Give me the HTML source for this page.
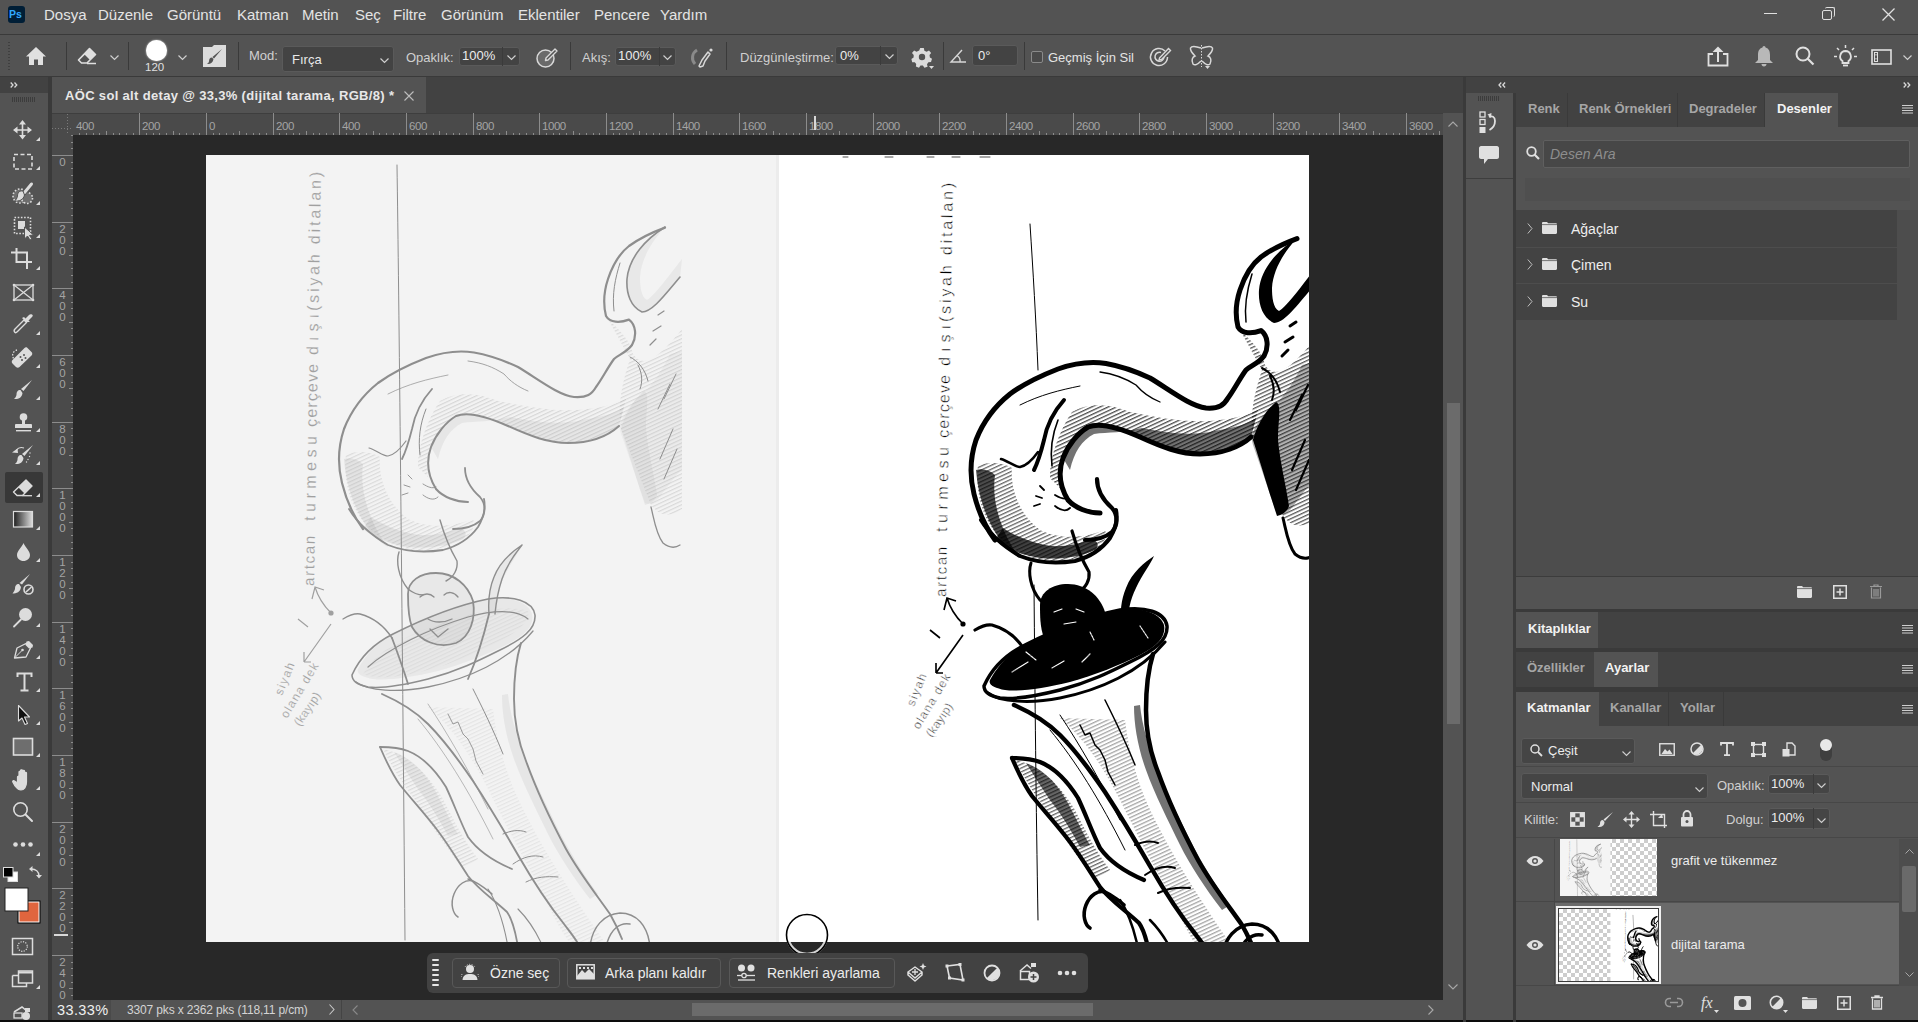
<!DOCTYPE html>
<html><head><meta charset="utf-8">
<style>
*{margin:0;padding:0;box-sizing:border-box}
html,body{width:1918px;height:1022px;overflow:hidden;background:#535353;font-family:"Liberation Sans",sans-serif;color:#dcdcdc}
.a{position:absolute}
.t{position:absolute;white-space:nowrap;line-height:1}
svg{position:absolute;overflow:visible}
.mi{font-size:15px;top:7px;color:#e4e4e4}
.ol{font-size:13px;color:#d0d0d0}
.box{position:absolute;background:#454545;border:1px solid #5a5a5a;border-radius:3px}
.sep{position:absolute;width:1px;background:#3a3a3a}
.rl{font-size:12px;color:#a0a0a0}
.tab{font-size:13px;font-weight:bold;color:#a6a6a6}
</style></head><body>
<!-- MENU BAR -->
<div class="a" style="left:0;top:0;width:1918px;height:34px;background:#535353"></div>
<div class="a" style="left:8px;top:6px;width:17px;height:17px;background:#001e36;border-radius:3px"></div>
<div class="t" style="left:9px;top:9px;font-size:10.5px;font-weight:bold;color:#31a8ff">Ps</div>
<div class="t mi" style="left:44px">Dosya</div>
<div class="t mi" style="left:98px">Düzenle</div>
<div class="t mi" style="left:167px">Görüntü</div>
<div class="t mi" style="left:237px">Katman</div>
<div class="t mi" style="left:302px">Metin</div>
<div class="t mi" style="left:355px">Seç</div>
<div class="t mi" style="left:393px">Filtre</div>
<div class="t mi" style="left:441px">Görünüm</div>
<div class="t mi" style="left:518px">Eklentiler</div>
<div class="t mi" style="left:594px">Pencere</div>
<div class="t mi" style="left:660px">Yardım</div>
<div class="a" style="left:1764px;top:13px;width:13px;height:1px;background:#e0e0e0"></div>
<div class="a" style="left:1822px;top:10px;width:10px;height:10px;border:1px solid #e0e0e0;border-radius:2px"></div>
<div class="a" style="left:1825px;top:7px;width:10px;height:10px;border-top:1px solid #e0e0e0;border-right:1px solid #e0e0e0;border-radius:2px"></div>
<svg style="left:1882px;top:8px" width="13" height="13"><path d="M0.5 0.5L12.5 12.5M12.5 0.5L0.5 12.5" stroke="#e0e0e0" stroke-width="1.3"/></svg>
<div class="a" style="left:0;top:34px;width:1918px;height:1px;background:#3a3a3a"></div>

<!-- OPTIONS BAR -->
<div class="a" style="left:8px;top:42px;width:2px;height:28px;background:repeating-linear-gradient(#3f3f3f 0 1px,transparent 1px 3px)"></div>
<svg style="left:25px;top:46px" width="22" height="20" viewBox="0 0 22 20"><path d="M11 1L1 10.5H4V19H9V13.5H13V19H18V10.5H21Z" fill="#e0e0e0"/></svg>
<div class="sep" style="left:66px;top:42px;height:28px"></div>
<svg style="left:77px;top:47px" width="20" height="18" viewBox="0 0 20 18"><path d="M12.5 1.5L18.5 7.5L10 16H4.5L1.5 13L12.5 1.5Z M1.5 13L7.5 7" fill="none" stroke="#e0e0e0" stroke-width="1.6" stroke-linejoin="round"/><path d="M12.5 1.5L18.5 7.5L13 13L7 7Z" fill="#e0e0e0"/><path d="M10 16.5H19" stroke="#e0e0e0" stroke-width="1.5"/></svg>
<svg style="left:110px;top:55px" width="9" height="6"><path d="M0.5 0.5L4.5 4.5L8.5 0.5" fill="none" stroke="#cfcfcf" stroke-width="1.2"/></svg>
<div class="sep" style="left:128px;top:42px;height:28px"></div>
<div class="a" style="left:146px;top:40px;width:21px;height:21px;border-radius:50%;background:#fff;box-shadow:0 0 2px #ddd"></div>
<div class="t" style="left:145px;top:62px;font-size:11.5px;color:#e0e0e0">120</div>
<svg style="left:178px;top:55px" width="9" height="6"><path d="M0.5 0.5L4.5 4.5L8.5 0.5" fill="none" stroke="#cfcfcf" stroke-width="1.2"/></svg>
<svg style="left:203px;top:45px" width="23" height="22" viewBox="0 0 23 22"><path d="M0 2H9L11 0H23V22H0Z" fill="#dcdcdc"/><path d="M19 4L11 13.5L9.5 12Z M9 12.5C7 12.5 6 14 6 16.5C5.5 18 4.5 18.5 4 19C7 19.5 10 18 10.5 14Z" fill="#535353"/></svg>
<div class="sep" style="left:238px;top:42px;height:28px"></div>
<div class="t ol" style="left:249px;top:49px">Mod:</div>
<div class="box" style="left:282px;top:46px;width:112px;height:26px;background:#434343"></div>
<div class="t ol" style="left:292px;top:53px;color:#e8e8e8">Fırça</div>
<svg style="left:380px;top:58px" width="9" height="6"><path d="M0.5 0.5L4.5 4.5L8.5 0.5" fill="none" stroke="#cfcfcf" stroke-width="1.2"/></svg>
<div class="t ol" style="left:406px;top:51px">Opaklık:</div>
<div class="box" style="left:459px;top:47px;width:61px;height:19px;background:#434343"></div>
<div class="a" style="left:502px;top:47px;width:1px;height:19px;background:#3b3b3b"></div>
<div class="t ol" style="left:462px;top:49px;color:#ececec">100%</div>
<svg style="left:507px;top:55px" width="9" height="6"><path d="M0.5 0.5L4.5 4.5L8.5 0.5" fill="none" stroke="#cfcfcf" stroke-width="1.2"/></svg>
<svg style="left:536px;top:46px" width="23" height="22" viewBox="0 0 23 22"><circle cx="9.5" cy="12.5" r="8.5" fill="#6a6a6a" stroke="#d8d8d8" stroke-width="1.5"/><path d="M10 12L19 3L21 5L12 14L9.5 14.5Z" fill="#535353" stroke="#d8d8d8" stroke-width="1.4" stroke-linejoin="round"/></svg>
<div class="sep" style="left:570px;top:42px;height:28px"></div>
<div class="t ol" style="left:582px;top:51px">Akış:</div>
<div class="box" style="left:615px;top:47px;width:61px;height:19px;background:#434343"></div>
<div class="a" style="left:659px;top:47px;width:1px;height:19px;background:#3b3b3b"></div>
<div class="t ol" style="left:618px;top:49px;color:#ececec">100%</div>
<svg style="left:663px;top:55px" width="9" height="6"><path d="M0.5 0.5L4.5 4.5L8.5 0.5" fill="none" stroke="#cfcfcf" stroke-width="1.2"/></svg>
<svg style="left:690px;top:47px" width="24" height="21" viewBox="0 0 24 21"><path d="M7 3A9 9 0 0 0 5 17" fill="none" stroke="#8a8a8a" stroke-width="3"/><path d="M9 19L12 13L18 5L20 7L15 14L13 19L10 20Z" fill="#535353" stroke="#d8d8d8" stroke-width="1.5" stroke-linejoin="round"/><circle cx="21" cy="3" r="1.6" fill="#d8d8d8"/></svg>
<div class="sep" style="left:726px;top:42px;height:28px"></div>
<div class="t ol" style="left:740px;top:51px">Düzgünleştirme:</div>
<div class="box" style="left:835px;top:46px;width:63px;height:19px;background:#434343"></div>
<div class="a" style="left:880px;top:46px;width:1px;height:19px;background:#3b3b3b"></div>
<div class="t ol" style="left:840px;top:49px;color:#ececec">0%</div>
<svg style="left:885px;top:54px" width="9" height="6"><path d="M0.5 0.5L4.5 4.5L8.5 0.5" fill="none" stroke="#cfcfcf" stroke-width="1.2"/></svg>
<svg style="left:912px;top:47px" width="22" height="22" viewBox="0 0 22 22"><g transform="translate(10 10)"><path d="M-1.8 -9H1.8L2.4 -6.3L4.6 -5.2L7 -6.6L9.1 -4.1L7.5 -2L7.9 0.4L10 1.8L9 5L6.4 5.2L5 7.2L5.6 9.8L2.4 10.8L0.9 8.5H-1.5L-3 10.8L-6.1 9.6L-5.8 7L-7.2 5.3L-9.8 5.3L-10.6 2L-8.4 0.6L-8.3 -1.9L-10 -4L-7.9 -6.6L-5.5 -5.3L-2.8 -6.5Z" fill="#dcdcdc"/><circle r="3.2" fill="#535353"/></g><path d="M17 19H22L19.5 22Z" fill="#dcdcdc"/></svg>
<div class="sep" style="left:943px;top:42px;height:28px"></div>
<svg style="left:950px;top:48px" width="17" height="15" viewBox="0 0 17 15"><path d="M16 14H1L12 2 M10 14A6 6 0 0 0 7.5 8" fill="none" stroke="#d8d8d8" stroke-width="1.4"/></svg>
<div class="box" style="left:972px;top:45px;width:46px;height:21px;background:#434343"></div>
<div class="t ol" style="left:978px;top:49px;color:#ececec">0°</div>
<div class="sep" style="left:1024px;top:42px;height:28px"></div>
<div class="a" style="left:1031px;top:51px;width:12px;height:12px;border:1px solid #8a8a8a;border-radius:2px;background:#4a4a4a"></div>
<div class="t ol" style="left:1048px;top:51px;color:#e4e4e4">Geçmiş İçin Sil</div>
<svg style="left:1150px;top:46px" width="22" height="21" viewBox="0 0 22 21"><path d="M15 5A8.5 8.5 0 1 0 17.5 11" fill="none" stroke="#d8d8d8" stroke-width="1.5"/><path d="M11 6.5A4.5 4.5 0 1 0 14 11" fill="none" stroke="#d8d8d8" stroke-width="1.5"/><path d="M9.5 12L18.5 2.5L20.5 4.5L11.5 13.5L9 14Z" fill="#535353" stroke="#d8d8d8" stroke-width="1.4"/></svg>
<svg style="left:1189px;top:45px" width="25" height="24" viewBox="0 0 25 24"><path d="M12 3C9 2 3 0 1.5 3C1 6 4 9 6 11C3.5 12 2 15 4 19C6 21 9 19 12 16" fill="none" stroke="#d8d8d8" stroke-width="1.5"/><path d="M13 3C16 2 22 0 23.5 3C24 6 21 9 19 11C21.5 12 23 15 21 19C19 21 16 19 13 16" fill="none" stroke="#d8d8d8" stroke-width="1.5"/><path d="M12.5 0V22" stroke="#d8d8d8" stroke-width="1" stroke-dasharray="1.5 1.5"/><path d="M16 21H21L18.5 24Z" fill="#d8d8d8"/></svg>
<svg style="left:1707px;top:46px" width="22" height="21" viewBox="0 0 22 21"><path d="M6 8H1.5V19.5H20.5V8H16" fill="none" stroke="#e0e0e0" stroke-width="1.8"/><path d="M11 16V5" stroke="#e0e0e0" stroke-width="2"/><path d="M11 0.5L5.5 6H16.5Z" fill="#e0e0e0"/></svg>
<svg style="left:1754px;top:45px" width="20" height="22" viewBox="0 0 20 22"><path d="M10 1C11 1 11.5 2 11.5 2.5C15 3.5 16 6.5 16 10V15L19 18H1L4 15V10C4 6.5 5 3.5 8.5 2.5C8.5 2 9 1 10 1Z M7.5 19H12.5C12.5 20.5 11.5 21.5 10 21.5C8.5 21.5 7.5 20.5 7.5 19Z" fill="#b8b8b8"/></svg>
<svg style="left:1795px;top:46px" width="20" height="20" viewBox="0 0 20 20"><circle cx="8" cy="8" r="6.5" fill="none" stroke="#e0e0e0" stroke-width="2"/><path d="M12.5 12.5L18.5 18.5" stroke="#e0e0e0" stroke-width="2.2"/></svg>
<svg style="left:1834px;top:45px" width="23" height="23" viewBox="0 0 23 23"><path d="M11.5 0V3 M3 3L5 5 M20 3L18 5 M0 11.5H3 M20 11.5H23" stroke="#e0e0e0" stroke-width="1.5"/><path d="M11.5 6A5.5 5.5 0 0 0 8.5 16V18H14.5V16A5.5 5.5 0 0 0 11.5 6Z" fill="none" stroke="#e0e0e0" stroke-width="1.8"/><path d="M9 20.5H14" stroke="#e0e0e0" stroke-width="1.8"/></svg>
<svg style="left:1871px;top:49px" width="21" height="16" viewBox="0 0 21 16"><rect x="1" y="1" width="19" height="14" fill="none" stroke="#e0e0e0" stroke-width="1.6"/><rect x="3.5" y="3.5" width="3" height="9" fill="none" stroke="#e0e0e0" stroke-width="1"/><rect x="4.5" y="5" width="1" height="1.5" fill="#e0e0e0"/><rect x="4.5" y="9" width="1" height="1.5" fill="#e0e0e0"/></svg>
<svg style="left:1903px;top:55px" width="9" height="6"><path d="M0.5 0.5L4.5 4.5L8.5 0.5" fill="none" stroke="#cfcfcf" stroke-width="1.2"/></svg>

<div class="a" style="left:0;top:76px;width:1918px;height:1px;background:#3a3a3a"></div>

<!-- LEFT TOOLBAR -->
<div class="a" style="left:0;top:77px;width:48px;height:16px;background:#424242"></div>
<svg style="left:10px;top:82px" width="8" height="6"><path d="M0.7 0.5L3 3L0.7 5.5M4.5 0.5L6.8 3L4.5 5.5" fill="none" stroke="#d8d8d8" stroke-width="1.3"/></svg>
<div class="a" style="left:0;top:93px;width:48px;height:929px;background:#535353"></div>
<div class="a" style="left:48px;top:77px;width:4px;height:945px;background:#3a3a3a"></div>

<svg style="left:0;top:0" width="48" height="1022" viewBox="0 0 48 1022">
<g fill="#3e3e3e"><rect x="12" y="97" width="24" height="5" fill="url(#grip)"/></g>
<defs><pattern id="grip" width="2" height="5" patternUnits="userSpaceOnUse"><rect width="1" height="5" fill="#3c3c3c"/></pattern></defs>
<g fill="#dcdcdc">
<path d="M36 141H40V137Z"/><path d="M36 170H40V166Z"/><path d="M36 205H40V201Z"/><path d="M36 238H40V234Z"/><path d="M36 270H40V266Z"/>
<path d="M36 335H40V331Z"/><path d="M36 368H40V364Z"/><path d="M36 400H40V396Z"/><path d="M36 432H40V428Z"/><path d="M36 465H40V461Z"/><path d="M36 497H40V493Z"/>
<path d="M36 530H40V526Z"/><path d="M36 562H40V558Z"/><path d="M36 627H40V623Z"/><path d="M36 659H40V655Z"/><path d="M36 692H40V688Z"/><path d="M36 725H40V721Z"/><path d="M36 757H40V753Z"/><path d="M36 790H40V786Z"/><path d="M36 856H40V852Z"/><path d="M36 989H40V985Z"/>
</g>
<!-- move -->
<g stroke="#dcdcdc" stroke-width="1.6" fill="none"><path d="M22.5 122V138 M14 130H31"/></g>
<g fill="#dcdcdc"><path d="M22.5 120L19 124.5H26Z M22.5 139.5L19 135H26Z M13 130L17.5 126.5V133.5Z M32 130L27.5 126.5V133.5Z"/></g>
<!-- marquee -->
<rect x="14" y="154.5" width="18" height="14.5" fill="none" stroke="#dcdcdc" stroke-width="1.6" stroke-dasharray="4 2.5"/>
<!-- quick select -->
<circle cx="20" cy="196" r="7" fill="#6e6e6e" stroke="#dcdcdc" stroke-width="1.6" stroke-dasharray="1.6 1.8"/>
<circle cx="27" cy="198" r="5.5" fill="#6e6e6e" stroke="#dcdcdc" stroke-width="1.6" stroke-dasharray="1.6 1.8"/>
<path d="M31.5 184L24 193" stroke="#535353" stroke-width="5" stroke-linecap="round"/><path d="M31.5 184L24.5 192.5" stroke="#dcdcdc" stroke-width="3" stroke-linecap="round"/><path d="M23 191C19 190.5 17.5 193 17.5 196C17 198.5 16 200 14.5 201C19 201.5 23.5 200 24.5 195Z" fill="#dcdcdc" stroke="#535353" stroke-width="1"/>
<!-- object select -->
<rect x="14.5" y="217.5" width="16" height="16" fill="none" stroke="#dcdcdc" stroke-width="1.6" stroke-dasharray="1.6 1.6"/>
<rect x="18" y="221" width="7" height="8" fill="#dcdcdc"/>
<path d="M24.5 227L24.5 239L27.5 236L30 240L32 239L29.5 235.5L33.5 235Z" fill="#dcdcdc" stroke="#535353" stroke-width="1"/>
<!-- crop -->
<g stroke="#dcdcdc" stroke-width="2" fill="none"><path d="M16.5 248V262H32 M11 252.5H27V269"/></g>
<!-- frame -->
<g stroke="#dcdcdc" stroke-width="1.3" fill="none"><rect x="14" y="285" width="19" height="15"/><path d="M14 285L33 300M33 285L14 300"/></g>
<g fill="#dcdcdc"><circle cx="14" cy="285" r="1.3"/><circle cx="33" cy="285" r="1.3"/><circle cx="14" cy="300" r="1.3"/><circle cx="33" cy="300" r="1.3"/></g>
<!-- eyedropper -->
<path d="M15 332.5C13.5 331 14 330 15 329L24 320L26.5 322.5L17.5 331.5C16.5 332.5 15.8 333.2 15 332.5Z" fill="none" stroke="#dcdcdc" stroke-width="1.4"/>
<path d="M22 318L26 322L30 322L28.5 320.5L32 317C33 316 33 315 32 314.5C31 314 30 314 29 315L25.5 318.5L24 317Z" fill="#dcdcdc"/>
<!-- healing -->
<path d="M17 350A5.5 5.5 0 0 0 14 359" fill="none" stroke="#dcdcdc" stroke-width="1.3" stroke-dasharray="1.5 1.5"/>
<path d="M27 347.5L31.5 352C32.5 353 32.5 354.5 31.5 355.5L19.5 367C18.5 368 17 368 16 367L12.5 363.5C11.5 362.5 11.5 361 12.5 360L24 348.5C25 347.5 26 347 27 347.5Z" fill="#dcdcdc"/>
<g fill="#535353"><circle cx="20.5" cy="357" r="1"/><circle cx="24" cy="355" r="1"/><circle cx="22" cy="360" r="1"/><circle cx="25.5" cy="358" r="1"/></g>
<!-- brush -->
<path d="M32 380L23.5 391L21 389Z" fill="#dcdcdc"/><path d="M20.5 390C17.5 390 16.5 392 16.5 395C16 397 15 398 14 399C18 399.5 22 398 22.5 393Z" fill="#dcdcdc"/>
<!-- stamp -->
<circle cx="23.5" cy="417" r="3.8" fill="#dcdcdc"/><path d="M22 419H25V424H31C31.5 424 32 424.5 32 425V428H15V425C15 424.5 15.5 424 16 424H22Z" fill="#dcdcdc"/><rect x="16" y="430" width="15" height="1.4" fill="#dcdcdc"/>
<!-- history brush -->
<path d="M33 445L24.5 456L22 454Z" fill="#dcdcdc"/><path d="M21.5 455C18.5 455 17.5 457 17.5 460C17 462 16 463 15 464C19 464.5 23 463 23.5 458Z" fill="#dcdcdc"/>
<path d="M24 448C21 447 18 448 16.5 450" fill="none" stroke="#dcdcdc" stroke-width="1.2"/><path d="M12 452.5L17.5 448.5L18 453Z" fill="#dcdcdc"/>
<g fill="#dcdcdc"><circle cx="30" cy="453" r="0.7"/><circle cx="29.5" cy="456.5" r="0.7"/><circle cx="28" cy="459.5" r="0.7"/><circle cx="26.5" cy="462" r="0.7"/></g>
</svg>
<div class="a" style="left:5px;top:472px;width:38px;height:31px;background:#383838;border-radius:2px"></div>
<svg style="left:0;top:0" width="48" height="1022" viewBox="0 0 48 1022">
<g fill="#dcdcdc">
<path d="M36 497H40V493Z"/>
</g>
<!-- eraser -->
<path d="M26 480L32 486L22.5 495.5H17L13.5 492Z" fill="none" stroke="#dcdcdc" stroke-width="1.4" stroke-linejoin="round"/><path d="M26 480L32 486L24.5 493.5L18.5 487.5Z" fill="#dcdcdc"/><path d="M22.5 495.7H32" stroke="#dcdcdc" stroke-width="1.3"/>
<!-- gradient -->
<defs><linearGradient id="gr" x1="0" x2="1"><stop offset="0" stop-color="#1e1e1e"/><stop offset="1" stop-color="#dedede"/></linearGradient></defs>
<rect x="13.5" y="511.5" width="19" height="15.5" fill="url(#gr)" stroke="#dcdcdc" stroke-width="1.2"/>
<!-- drop -->
<path d="M23.5 543C22 547 17 551 17 555C17 558.5 20 561 23.5 561C27 561 30 558.5 30 555C30 551 25 547 23.5 543Z" fill="#dcdcdc"/>
<!-- sponge brush -->
<path d="M30 574L22 584.5L19.5 583Z" fill="#dcdcdc"/><path d="M19 584C16 584 15 586 15 589C14.5 591 13.5 592 12.5 593.5C16.5 593.5 20.5 592 21 587Z" fill="#dcdcdc"/>
<circle cx="28.5" cy="589.5" r="4.5" fill="none" stroke="#dcdcdc" stroke-width="1.6"/><path d="M26 592L31.5 587" stroke="#dcdcdc" stroke-width="1.6"/>
<!-- dodge -->
<circle cx="25.5" cy="614.5" r="6.5" fill="#dcdcdc"/><path d="M21 619.5L14 626.5" stroke="#dcdcdc" stroke-width="1.8" stroke-linecap="round"/>
<!-- pen -->
<path d="M14.5 658L17 648L26 643.5L30.5 648L26 657Z" fill="none" stroke="#dcdcdc" stroke-width="1.3" stroke-linejoin="round"/><path d="M26.5 641.5L29 641L33 645L32.5 647.5L29 648.5L25.5 645Z" fill="#dcdcdc"/><path d="M14.5 658L22 650.5" stroke="#dcdcdc" stroke-width="1"/><circle cx="22.5" cy="650" r="1.3" fill="#dcdcdc"/>
<!-- type -->
<path d="M17.5 677V673.5H31.5V677 M24.5 674V690 M20.5 690.5H28.5" fill="none" stroke="#dcdcdc" stroke-width="2"/>
<!-- arrow -->
<path d="M18.5 705.5V721L22 718L25 724.5L27.5 723.5L24.5 717H29.5Z" fill="#111" stroke="#dcdcdc" stroke-width="1.1" stroke-linejoin="round"/>
<!-- rect -->
<rect x="13.5" y="738.5" width="19" height="16.5" fill="#6e6e6e" stroke="#dcdcdc" stroke-width="1.6"/>
<!-- hand -->
<path d="M19 779V772C19 771 20.5 771 20.5 772V779 M20.5 778V770.5C20.5 769.5 22.5 769.5 22.5 770.5V778 M22.5 778V771C22.5 770 24.5 770 24.5 771V778 M24.5 778V773C24.5 772 26.5 772 26.5 773V782C26.5 787 24 790 21 790C18 790 16.5 788 15 786L12.8 782C12.3 781 13.5 780 14.5 781L17.5 783V777C17.5 776 19 776 19 777" fill="#dcdcdc" stroke="#dcdcdc" stroke-width="1.2"/>
<!-- zoom -->
<circle cx="20.5" cy="809.5" r="6.7" fill="none" stroke="#dcdcdc" stroke-width="1.6"/><path d="M25.5 814.5L32 821" stroke="#dcdcdc" stroke-width="2" stroke-linecap="round"/>
<!-- dots -->
<g fill="#dcdcdc"><circle cx="15.5" cy="844.5" r="2.3"/><circle cx="23" cy="844.5" r="2.3"/><circle cx="30.5" cy="844.5" r="2.3"/></g>
<!-- default colors -->
<rect x="8" y="872" width="9.5" height="9.5" fill="#fff" stroke="#dcdcdc" stroke-width="1"/><rect x="3.5" y="867.5" width="9.5" height="9.5" fill="#000" stroke="#dcdcdc" stroke-width="1"/>
<!-- swap -->
<path d="M31 869C36 869 39 872 39 876" fill="none" stroke="#dcdcdc" stroke-width="1.6"/><path d="M29 869L32.5 866V872Z M39 878.5L36 875H42Z" fill="#dcdcdc"/>
<!-- fg/bg -->
<rect x="17.5" y="900.5" width="23" height="23" fill="#000" /><rect x="18.5" y="901.5" width="21" height="21" fill="#fff"/><rect x="19.5" y="902.5" width="19" height="19" fill="#e0653e"/>
<rect x="4.5" y="887.5" width="24" height="24" fill="#222"/><rect x="5.5" y="888.5" width="22" height="22" fill="#fff"/>
<!-- quick mask -->
<rect x="12.5" y="938.5" width="20" height="16" fill="none" stroke="#dcdcdc" stroke-width="1.5"/><circle cx="22.5" cy="946.5" r="4.8" fill="none" stroke="#dcdcdc" stroke-width="1.2" stroke-dasharray="1.2 1.3"/>
<!-- screen mode -->
<path d="M12.5 975.5H18.5 M12.5 975.5V986.5H26.5V983" fill="none" stroke="#dcdcdc" stroke-width="1.5"/><rect x="18.5" y="971" width="14" height="12" fill="none" stroke="#dcdcdc" stroke-width="1.5"/><path d="M18.5 972.5H32.5" stroke="#dcdcdc" stroke-width="2"/>
<!-- partial bottom -->
<path d="M14 1012L22 1007L28 1012" fill="none" stroke="#dcdcdc" stroke-width="1.5"/><rect x="14" y="1013" width="8" height="5" fill="none" stroke="#dcdcdc" stroke-width="1.3"/><circle cx="26" cy="1016" r="4" fill="#dcdcdc"/><rect x="25" y="1008" width="5" height="4" fill="#dcdcdc"/>
</svg>

<!-- DOC TAB AREA -->
<div class="a" style="left:52px;top:77px;width:1411px;height:36px;background:#424242"></div>
<div class="a" style="left:52px;top:77px;width:374px;height:36px;background:#535353"></div>
<div class="t tab" style="left:65px;top:89px;color:#e8e8e8;letter-spacing:0.33px">AÖC sol alt detay @ 33,3% (dijital tarama, RGB/8) *</div>
<svg style="left:404px;top:91px" width="10" height="10"><path d="M0.5 0.5L9.5 9.5M9.5 0.5L0.5 9.5" stroke="#bdbdbd" stroke-width="1.1"/></svg>

<!-- RULERS -->
<div class="a" style="left:52px;top:113px;width:1391px;height:22px;background:#4a4a4a;border-top:1px solid #3e3e3e"></div>
<div class="a" style="left:52px;top:135px;width:21px;height:865px;background:#4a4a4a"></div>

<svg style="left:0;top:0" width="1443" height="136" viewBox="0 0 1443 136">
<g stroke="#8c8c8c" stroke-width="1">
<path d="M79.5 133V135"/>
<path d="M86.5 133V135"/>
<path d="M93.5 133V135"/>
<path d="M99.5 133V135"/>
<path d="M106.5 131V135"/>
<path d="M113.5 133V135"/>
<path d="M119.5 133V135"/>
<path d="M126.5 133V135"/>
<path d="M133.5 133V135"/>
<path d="M139.5 113V135"/>
<path d="M146.5 133V135"/>
<path d="M153.5 133V135"/>
<path d="M159.5 133V135"/>
<path d="M166.5 133V135"/>
<path d="M173.5 131V135"/>
<path d="M179.5 133V135"/>
<path d="M186.5 133V135"/>
<path d="M193.5 133V135"/>
<path d="M199.5 133V135"/>
<path d="M206.5 113V135"/>
<path d="M213.5 133V135"/>
<path d="M219.5 133V135"/>
<path d="M226.5 133V135"/>
<path d="M233.5 133V135"/>
<path d="M239.5 131V135"/>
<path d="M246.5 133V135"/>
<path d="M253.5 133V135"/>
<path d="M259.5 133V135"/>
<path d="M266.5 133V135"/>
<path d="M273.5 113V135"/>
<path d="M279.5 133V135"/>
<path d="M286.5 133V135"/>
<path d="M293.5 133V135"/>
<path d="M299.5 133V135"/>
<path d="M306.5 131V135"/>
<path d="M313.5 133V135"/>
<path d="M319.5 133V135"/>
<path d="M326.5 133V135"/>
<path d="M333.5 133V135"/>
<path d="M339.5 113V135"/>
<path d="M346.5 133V135"/>
<path d="M353.5 133V135"/>
<path d="M359.5 133V135"/>
<path d="M366.5 133V135"/>
<path d="M373.5 131V135"/>
<path d="M379.5 133V135"/>
<path d="M386.5 133V135"/>
<path d="M393.5 133V135"/>
<path d="M399.5 133V135"/>
<path d="M406.5 113V135"/>
<path d="M413.5 133V135"/>
<path d="M419.5 133V135"/>
<path d="M426.5 133V135"/>
<path d="M433.5 133V135"/>
<path d="M439.5 131V135"/>
<path d="M446.5 133V135"/>
<path d="M453.5 133V135"/>
<path d="M459.5 133V135"/>
<path d="M466.5 133V135"/>
<path d="M473.5 113V135"/>
<path d="M479.5 133V135"/>
<path d="M486.5 133V135"/>
<path d="M493.5 133V135"/>
<path d="M499.5 133V135"/>
<path d="M506.5 131V135"/>
<path d="M513.5 133V135"/>
<path d="M519.5 133V135"/>
<path d="M526.5 133V135"/>
<path d="M533.5 133V135"/>
<path d="M539.5 113V135"/>
<path d="M546.5 133V135"/>
<path d="M553.5 133V135"/>
<path d="M559.5 133V135"/>
<path d="M566.5 133V135"/>
<path d="M573.5 131V135"/>
<path d="M579.5 133V135"/>
<path d="M586.5 133V135"/>
<path d="M593.5 133V135"/>
<path d="M599.5 133V135"/>
<path d="M606.5 113V135"/>
<path d="M613.5 133V135"/>
<path d="M619.5 133V135"/>
<path d="M626.5 133V135"/>
<path d="M633.5 133V135"/>
<path d="M639.5 131V135"/>
<path d="M646.5 133V135"/>
<path d="M653.5 133V135"/>
<path d="M659.5 133V135"/>
<path d="M666.5 133V135"/>
<path d="M673.5 113V135"/>
<path d="M679.5 133V135"/>
<path d="M686.5 133V135"/>
<path d="M693.5 133V135"/>
<path d="M699.5 133V135"/>
<path d="M706.5 131V135"/>
<path d="M713.5 133V135"/>
<path d="M719.5 133V135"/>
<path d="M726.5 133V135"/>
<path d="M733.5 133V135"/>
<path d="M739.5 113V135"/>
<path d="M746.5 133V135"/>
<path d="M753.5 133V135"/>
<path d="M759.5 133V135"/>
<path d="M766.5 133V135"/>
<path d="M773.5 131V135"/>
<path d="M779.5 133V135"/>
<path d="M786.5 133V135"/>
<path d="M793.5 133V135"/>
<path d="M799.5 133V135"/>
<path d="M806.5 113V135"/>
<path d="M813.5 133V135"/>
<path d="M819.5 133V135"/>
<path d="M826.5 133V135"/>
<path d="M833.5 133V135"/>
<path d="M839.5 131V135"/>
<path d="M846.5 133V135"/>
<path d="M853.5 133V135"/>
<path d="M859.5 133V135"/>
<path d="M866.5 133V135"/>
<path d="M873.5 113V135"/>
<path d="M879.5 133V135"/>
<path d="M886.5 133V135"/>
<path d="M893.5 133V135"/>
<path d="M899.5 133V135"/>
<path d="M906.5 131V135"/>
<path d="M913.5 133V135"/>
<path d="M919.5 133V135"/>
<path d="M926.5 133V135"/>
<path d="M933.5 133V135"/>
<path d="M939.5 113V135"/>
<path d="M946.5 133V135"/>
<path d="M953.5 133V135"/>
<path d="M959.5 133V135"/>
<path d="M966.5 133V135"/>
<path d="M973.5 131V135"/>
<path d="M979.5 133V135"/>
<path d="M986.5 133V135"/>
<path d="M993.5 133V135"/>
<path d="M999.5 133V135"/>
<path d="M1006.5 113V135"/>
<path d="M1013.5 133V135"/>
<path d="M1019.5 133V135"/>
<path d="M1026.5 133V135"/>
<path d="M1033.5 133V135"/>
<path d="M1039.5 131V135"/>
<path d="M1046.5 133V135"/>
<path d="M1053.5 133V135"/>
<path d="M1059.5 133V135"/>
<path d="M1066.5 133V135"/>
<path d="M1073.5 113V135"/>
<path d="M1079.5 133V135"/>
<path d="M1086.5 133V135"/>
<path d="M1093.5 133V135"/>
<path d="M1099.5 133V135"/>
<path d="M1106.5 131V135"/>
<path d="M1113.5 133V135"/>
<path d="M1119.5 133V135"/>
<path d="M1126.5 133V135"/>
<path d="M1133.5 133V135"/>
<path d="M1139.5 113V135"/>
<path d="M1146.5 133V135"/>
<path d="M1153.5 133V135"/>
<path d="M1159.5 133V135"/>
<path d="M1166.5 133V135"/>
<path d="M1173.5 131V135"/>
<path d="M1179.5 133V135"/>
<path d="M1186.5 133V135"/>
<path d="M1193.5 133V135"/>
<path d="M1199.5 133V135"/>
<path d="M1206.5 113V135"/>
<path d="M1213.5 133V135"/>
<path d="M1219.5 133V135"/>
<path d="M1226.5 133V135"/>
<path d="M1233.5 133V135"/>
<path d="M1239.5 131V135"/>
<path d="M1246.5 133V135"/>
<path d="M1253.5 133V135"/>
<path d="M1259.5 133V135"/>
<path d="M1266.5 133V135"/>
<path d="M1273.5 113V135"/>
<path d="M1279.5 133V135"/>
<path d="M1286.5 133V135"/>
<path d="M1293.5 133V135"/>
<path d="M1299.5 133V135"/>
<path d="M1306.5 131V135"/>
<path d="M1313.5 133V135"/>
<path d="M1319.5 133V135"/>
<path d="M1326.5 133V135"/>
<path d="M1333.5 133V135"/>
<path d="M1339.5 113V135"/>
<path d="M1346.5 133V135"/>
<path d="M1353.5 133V135"/>
<path d="M1359.5 133V135"/>
<path d="M1366.5 133V135"/>
<path d="M1373.5 131V135"/>
<path d="M1379.5 133V135"/>
<path d="M1386.5 133V135"/>
<path d="M1393.5 133V135"/>
<path d="M1399.5 133V135"/>
<path d="M1406.5 113V135"/>
<path d="M1413.5 133V135"/>
<path d="M1419.5 133V135"/>
<path d="M1426.5 133V135"/>
<path d="M1433.5 133V135"/>
<path d="M1439.5 131V135"/>
</g><g fill="#a4a4a4" font-size="11.5" font-family="Liberation Sans" letter-spacing="-0.45">
<text x="76" y="130">400</text>
<text x="142" y="130">200</text>
<text x="209" y="130">0</text>
<text x="276" y="130">200</text>
<text x="342" y="130">400</text>
<text x="409" y="130">600</text>
<text x="476" y="130">800</text>
<text x="542" y="130">1000</text>
<text x="609" y="130">1200</text>
<text x="676" y="130">1400</text>
<text x="742" y="130">1600</text>
<text x="809" y="130">1800</text>
<text x="876" y="130">2000</text>
<text x="942" y="130">2200</text>
<text x="1009" y="130">2400</text>
<text x="1076" y="130">2600</text>
<text x="1142" y="130">2800</text>
<text x="1209" y="130">3000</text>
<text x="1276" y="130">3200</text>
<text x="1342" y="130">3400</text>
<text x="1409" y="130">3600</text>
</g>
<path d="M52 128.5H72 M67.5 114V135" stroke="#7a7a7a" stroke-width="1" stroke-dasharray="1 2"/>
</svg>
<svg style="left:0;top:0" width="74" height="1000" viewBox="0 0 74 1000">
<g stroke="#8c8c8c" stroke-width="1">
<path d="M71 135.5H73"/>
<path d="M71 142.5H73"/>
<path d="M71 148.5H73"/>
<path d="M52 155.5H73"/>
<path d="M71 162.5H73"/>
<path d="M71 168.5H73"/>
<path d="M71 175.5H73"/>
<path d="M71 182.5H73"/>
<path d="M69 188.5H73"/>
<path d="M71 195.5H73"/>
<path d="M71 202.5H73"/>
<path d="M71 208.5H73"/>
<path d="M71 215.5H73"/>
<path d="M52 222.5H73"/>
<path d="M71 228.5H73"/>
<path d="M71 235.5H73"/>
<path d="M71 242.5H73"/>
<path d="M71 248.5H73"/>
<path d="M69 255.5H73"/>
<path d="M71 262.5H73"/>
<path d="M71 268.5H73"/>
<path d="M71 275.5H73"/>
<path d="M71 282.5H73"/>
<path d="M52 288.5H73"/>
<path d="M71 295.5H73"/>
<path d="M71 302.5H73"/>
<path d="M71 308.5H73"/>
<path d="M71 315.5H73"/>
<path d="M69 322.5H73"/>
<path d="M71 328.5H73"/>
<path d="M71 335.5H73"/>
<path d="M71 342.5H73"/>
<path d="M71 348.5H73"/>
<path d="M52 355.5H73"/>
<path d="M71 362.5H73"/>
<path d="M71 368.5H73"/>
<path d="M71 375.5H73"/>
<path d="M71 382.5H73"/>
<path d="M69 388.5H73"/>
<path d="M71 395.5H73"/>
<path d="M71 402.5H73"/>
<path d="M71 408.5H73"/>
<path d="M71 415.5H73"/>
<path d="M52 422.5H73"/>
<path d="M71 428.5H73"/>
<path d="M71 435.5H73"/>
<path d="M71 442.5H73"/>
<path d="M71 448.5H73"/>
<path d="M69 455.5H73"/>
<path d="M71 462.5H73"/>
<path d="M71 468.5H73"/>
<path d="M71 475.5H73"/>
<path d="M71 482.5H73"/>
<path d="M52 488.5H73"/>
<path d="M71 495.5H73"/>
<path d="M71 502.5H73"/>
<path d="M71 508.5H73"/>
<path d="M71 515.5H73"/>
<path d="M69 522.5H73"/>
<path d="M71 528.5H73"/>
<path d="M71 535.5H73"/>
<path d="M71 542.5H73"/>
<path d="M71 548.5H73"/>
<path d="M52 555.5H73"/>
<path d="M71 562.5H73"/>
<path d="M71 568.5H73"/>
<path d="M71 575.5H73"/>
<path d="M71 582.5H73"/>
<path d="M69 588.5H73"/>
<path d="M71 595.5H73"/>
<path d="M71 602.5H73"/>
<path d="M71 608.5H73"/>
<path d="M71 615.5H73"/>
<path d="M52 622.5H73"/>
<path d="M71 628.5H73"/>
<path d="M71 635.5H73"/>
<path d="M71 642.5H73"/>
<path d="M71 648.5H73"/>
<path d="M69 655.5H73"/>
<path d="M71 662.5H73"/>
<path d="M71 668.5H73"/>
<path d="M71 675.5H73"/>
<path d="M71 682.5H73"/>
<path d="M52 688.5H73"/>
<path d="M71 695.5H73"/>
<path d="M71 702.5H73"/>
<path d="M71 708.5H73"/>
<path d="M71 715.5H73"/>
<path d="M69 722.5H73"/>
<path d="M71 728.5H73"/>
<path d="M71 735.5H73"/>
<path d="M71 742.5H73"/>
<path d="M71 748.5H73"/>
<path d="M52 755.5H73"/>
<path d="M71 762.5H73"/>
<path d="M71 768.5H73"/>
<path d="M71 775.5H73"/>
<path d="M71 782.5H73"/>
<path d="M69 788.5H73"/>
<path d="M71 795.5H73"/>
<path d="M71 802.5H73"/>
<path d="M71 808.5H73"/>
<path d="M71 815.5H73"/>
<path d="M52 822.5H73"/>
<path d="M71 828.5H73"/>
<path d="M71 835.5H73"/>
<path d="M71 842.5H73"/>
<path d="M71 848.5H73"/>
<path d="M69 855.5H73"/>
<path d="M71 862.5H73"/>
<path d="M71 868.5H73"/>
<path d="M71 875.5H73"/>
<path d="M71 882.5H73"/>
<path d="M52 888.5H73"/>
<path d="M71 895.5H73"/>
<path d="M71 902.5H73"/>
<path d="M71 908.5H73"/>
<path d="M71 915.5H73"/>
<path d="M69 922.5H73"/>
<path d="M71 928.5H73"/>
<path d="M71 935.5H73"/>
<path d="M71 942.5H73"/>
<path d="M71 948.5H73"/>
<path d="M52 955.5H73"/>
<path d="M71 962.5H73"/>
<path d="M71 968.5H73"/>
<path d="M71 975.5H73"/>
<path d="M71 982.5H73"/>
<path d="M69 988.5H73"/>
<path d="M71 995.5H73"/>
</g><g fill="#a4a4a4" font-size="11.5" font-family="Liberation Sans" text-anchor="middle">
<text x="62.5" y="166">0</text>
<text x="62.5" y="233">2</text>
<text x="62.5" y="244">0</text>
<text x="62.5" y="255">0</text>
<text x="62.5" y="299">4</text>
<text x="62.5" y="310">0</text>
<text x="62.5" y="321">0</text>
<text x="62.5" y="366">6</text>
<text x="62.5" y="377">0</text>
<text x="62.5" y="388">0</text>
<text x="62.5" y="433">8</text>
<text x="62.5" y="444">0</text>
<text x="62.5" y="455">0</text>
<text x="62.5" y="499">1</text>
<text x="62.5" y="510">0</text>
<text x="62.5" y="521">0</text>
<text x="62.5" y="532">0</text>
<text x="62.5" y="566">1</text>
<text x="62.5" y="577">2</text>
<text x="62.5" y="588">0</text>
<text x="62.5" y="599">0</text>
<text x="62.5" y="633">1</text>
<text x="62.5" y="644">4</text>
<text x="62.5" y="655">0</text>
<text x="62.5" y="666">0</text>
<text x="62.5" y="699">1</text>
<text x="62.5" y="710">6</text>
<text x="62.5" y="721">0</text>
<text x="62.5" y="732">0</text>
<text x="62.5" y="766">1</text>
<text x="62.5" y="777">8</text>
<text x="62.5" y="788">0</text>
<text x="62.5" y="799">0</text>
<text x="62.5" y="833">2</text>
<text x="62.5" y="844">0</text>
<text x="62.5" y="855">0</text>
<text x="62.5" y="866">0</text>
<text x="62.5" y="899">2</text>
<text x="62.5" y="910">2</text>
<text x="62.5" y="921">0</text>
<text x="62.5" y="932">0</text>
<text x="62.5" y="966">2</text>
<text x="62.5" y="977">4</text>
<text x="62.5" y="988">0</text>
<text x="62.5" y="999">0</text>
</g></svg>
<div class="a" style="left:814px;top:116px;width:2px;height:14px;background:#d8d8d8"></div>
<div class="a" style="left:54px;top:934px;width:14px;height:2px;background:#d8d8d8"></div>
<!-- CANVAS -->
<div class="a" style="left:73px;top:135px;width:1370px;height:865px;background:#282828"></div>
<!--ART--><svg style="left:206px;top:155px" width="1103" height="787" viewBox="206 155 1103 787">
<defs><pattern id="hR" width="3.5" height="3.5" patternUnits="userSpaceOnUse" patternTransform="rotate(65)"><rect width="1.3" height="3.5" fill="#000"/></pattern><pattern id="hL" width="3.5" height="3.5" patternUnits="userSpaceOnUse" patternTransform="rotate(65)"><rect width="1.2" height="3.5" fill="#8e8e8e"/></pattern><clipPath id="cL"><rect x="206" y="155" width="573" height="787"/></clipPath><clipPath id="cR"><rect x="779" y="155" width="530" height="787"/></clipPath></defs>
<rect x="206" y="155" width="573" height="787" fill="#f3f3f3"/>
<rect x="776" y="155" width="3" height="787" fill="#ececec"/>
<rect x="779" y="155" width="530" height="787" fill="#fff"/>
<g clip-path="url(#cL)"><g transform="translate(-632 -11)"><path d="M843 157H848 M885 157H893 M927 157H934 M952 157H960 M980 157H990" fill="none" stroke="#8e8e8e" stroke-width="0.5" stroke-linecap="round" stroke-linejoin="round"/>
<path d="M1297 238.6C1285 243 1272 249 1261 257C1252 264 1245 275 1240 290C1236 302 1235 315 1238 327C1242 334 1252 334 1261 330.6C1268 336 1269 347 1264 356C1258 364 1250 366 1246 370C1240 378 1234 390 1228 398C1224 405 1219 409 1206 408C1190 406 1170 390 1150 378C1135 371 1120 366 1106 363.5C1090 361 1075 363 1058 369C1040 376 1025 383 1010 394C995 406 983 422 976 440C970 458 970 478 974 494C979 514 986 528 995 540" fill="none" stroke="#8e8e8e" stroke-width="2.2" stroke-linecap="round" stroke-linejoin="round"/>
<path d="M1297 238C1278 250 1261 268 1259 290C1258 305 1263 318 1274 323C1284 323 1296 307 1312 288L1314 270C1300 288 1287 306 1279 311C1273 308 1272 297 1272 288C1273 270 1284 252 1297 238Z" fill="#8e8e8e" fill-opacity="0.10"/>
<path d="M1252 274C1247 290 1244 305 1246 322" fill="none" stroke="#8e8e8e" stroke-width="1.0" stroke-linecap="round" stroke-linejoin="round"/>
<path d="M1290 326L1296 322 M1285 342L1293 337 M1282 356L1288 350" fill="none" stroke="#8e8e8e" stroke-width="1.2" stroke-linecap="round" stroke-linejoin="round"/>
<path d="M1262 368C1270 372 1277 380 1280 392 M1270 376C1274 384 1275 392 1272 400" fill="none" stroke="#8e8e8e" stroke-width="1.0" stroke-linecap="round" stroke-linejoin="round"/>
<path d="M1251 437C1240 447 1222 454 1200 454C1180 454 1162 447 1140 437C1120 428 1100 422 1088 427C1078 433 1068 445 1063 458C1058 472 1060 487 1068 500C1075 508 1088 513 1100 513" fill="none" stroke="#8e8e8e" stroke-width="2.0" stroke-linecap="round" stroke-linejoin="round"/>
<path d="M1251 437C1240 447 1222 454 1200 454C1180 454 1162 447 1140 437C1120 428 1100 422 1088 427C1078 433 1068 445 1063 458L1070 470C1074 452 1082 440 1094 434C1108 432 1124 433 1142 428C1162 432 1186 436 1210 432C1230 428 1245 426 1256 418Z" fill="#8e8e8e" fill-opacity="0.12"/>
<path d="M1251 437C1240 447 1222 454 1200 454C1180 454 1162 447 1140 437C1120 428 1100 422 1088 427C1078 433 1068 445 1063 458C1060 468 1058 478 1060 488L1050 478C1050 455 1060 430 1072 412C1090 402 1110 404 1130 412C1160 418 1190 424 1220 420C1238 418 1250 414 1258 410Z" fill="url(#hL)" fill-opacity="0.28"/>
<path d="M1100 372C1115 374 1125 378 1136 385C1142 392 1150 398 1160 402" fill="none" stroke="#8e8e8e" stroke-width="0.8" stroke-linecap="round" stroke-linejoin="round"/>
<path d="M1020 405C1040 395 1060 390 1080 386" fill="none" stroke="#8e8e8e" stroke-width="0.7" stroke-linecap="round" stroke-linejoin="round"/>
<path d="M1064 400C1055 410 1047 424 1044 440C1041 452 1038 462 1034 470" fill="none" stroke="#8e8e8e" stroke-width="1.8" stroke-linecap="round" stroke-linejoin="round"/>
<path d="M1058 420C1052 435 1050 450 1052 466" fill="none" stroke="#8e8e8e" stroke-width="1.0" stroke-linecap="round" stroke-linejoin="round"/>
<path d="M1001 459C1008 461 1015 467 1020 467C1026 466 1033 459 1038 452" fill="none" stroke="#8e8e8e" stroke-width="1.2" stroke-linecap="round" stroke-linejoin="round"/>
<path d="M976 470C978 495 985 515 995 532C1003 545 1010 552 1020 558C1012 548 1005 535 1000 520C995 505 993 490 995 475C990 470 982 468 976 470Z" fill="#8e8e8e" fill-opacity="0.15"/>
<path d="M981 520C990 535 1003 546 1020 556C1035 562 1055 564 1075 561C1090 557 1102 549 1110 538C1116 528 1118 520 1116 510" fill="none" stroke="#8e8e8e" stroke-width="1.8" stroke-linecap="round" stroke-linejoin="round"/>
<path d="M995 540C1005 548 1020 555 1040 558C1060 560 1080 557 1095 550C1100 545 1098 540 1090 540C1075 545 1060 548 1045 545C1030 542 1015 536 1003 528Z" fill="#8e8e8e" fill-opacity="0.17"/>
<path d="M1097 479C1097 490 1103 500 1112 508C1118 515 1118 525 1112 532C1105 538 1095 540 1085 540" fill="none" stroke="#8e8e8e" stroke-width="1.8" stroke-linecap="round" stroke-linejoin="round"/>
<path d="M1040 486L1044 490 M1036 496L1042 498 M1034 506L1040 504 M1055 495C1060 498 1064 500 1068 498 M1055 506C1060 510 1066 512 1070 508" fill="none" stroke="#8e8e8e" stroke-width="0.9" stroke-linecap="round" stroke-linejoin="round"/>
<path d="M1251 437C1256 425 1264 412 1275 404C1285 396 1295 380 1302 365L1314 362L1314 480C1303 492 1296 503 1290 510C1285 514 1280 516 1277 514C1270 495 1262 470 1253 445Z" fill="#8e8e8e" fill-opacity="0.07"/>
<path d="M1253 440C1262 468 1270 495 1277 516C1282 515 1287 512 1289 506C1286 485 1280 462 1278 440C1278 420 1282 405 1276 402C1266 410 1257 425 1253 440Z" fill="#8e8e8e" fill-opacity="0.10"/>
<path d="M1292 470L1305 440 M1296 490L1309 460 M1290 420L1302 395 M1296 410L1308 385" fill="none" stroke="#8e8e8e" stroke-width="1.0" stroke-linecap="round" stroke-linejoin="round"/>
<path d="M1283 518C1286 530 1288 545 1295 554C1300 558 1306 560 1312 556" fill="none" stroke="#8e8e8e" stroke-width="1.3" stroke-linecap="round" stroke-linejoin="round"/>
<path d="M1031 563C1028 572 1030 588 1040 600C1045 604 1050 606 1055 606" fill="none" stroke="#8e8e8e" stroke-width="1.4" stroke-linecap="round" stroke-linejoin="round"/>
<path d="M1072 531C1076 545 1082 560 1089 572C1090 580 1086 588 1078 592" fill="none" stroke="#8e8e8e" stroke-width="1.4" stroke-linecap="round" stroke-linejoin="round"/>
<path d="M1040 605C1040 592 1052 584 1068 584C1086 584 1100 596 1105 612C1108 630 1102 648 1088 654C1070 660 1052 652 1044 638C1040 628 1040 615 1040 605Z" fill="#8e8e8e" fill-opacity="0.10"/>
<path d="M990 680C998 665 1010 652 1030 642C1060 628 1090 616 1120 610C1140 607 1160 612 1164 625C1166 635 1160 645 1140 655C1120 665 1095 675 1070 682C1045 688 1020 692 1005 690C995 688 988 685 990 680Z" fill="#8e8e8e" fill-opacity="0.10"/>
<path d="M984 686C992 668 1005 655 1025 645C1055 630 1090 616 1120 610C1145 606 1165 612 1167 626C1168 640 1155 650 1130 662C1110 672 1090 682 1060 690C1040 695 1015 700 1000 698C990 696 984 692 984 686Z" fill="none" stroke="#8e8e8e" stroke-width="1.6" stroke-linecap="round" stroke-linejoin="round"/>
<path d="M988 693C1000 702 1030 704 1060 698C1100 690 1140 672 1165 642" fill="none" stroke="#8e8e8e" stroke-width="1.3" stroke-linecap="round" stroke-linejoin="round"/>
<path d="M975 630C980 627 986 624 992 625C1003 628 1015 635 1024 649" fill="none" stroke="#8e8e8e" stroke-width="1.4" stroke-linecap="round" stroke-linejoin="round"/>
<path d="M1154 556C1145 562 1132 572 1126 588C1121 600 1120 612 1121 625L1127 625C1128 612 1130 600 1136 588C1142 575 1150 565 1154 556Z" fill="#8e8e8e" fill-opacity="0.10"/>
<path d="M1014 705C1030 712 1045 720 1060 735C1075 750 1090 770 1105 792C1120 815 1135 840 1150 866C1165 892 1180 915 1196 935C1202 943 1208 950 1212 958" fill="none" stroke="#8e8e8e" stroke-width="1.9" stroke-linecap="round" stroke-linejoin="round"/>
<path d="M1153 654C1148 670 1146 690 1146 710C1146 730 1150 752 1158 772C1168 800 1182 830 1198 860C1212 885 1228 905 1242 925C1246 932 1250 940 1254 950" fill="none" stroke="#8e8e8e" stroke-width="1.9" stroke-linecap="round" stroke-linejoin="round"/>
<path d="M1140 705C1142 725 1148 745 1156 765C1165 790 1178 815 1190 840C1200 860 1215 885 1230 905L1222 910C1205 888 1190 865 1180 845C1168 820 1155 795 1146 770C1138 748 1134 725 1134 706Z" fill="#8e8e8e" fill-opacity="0.12"/>
<path d="M1105 700C1115 720 1125 740 1135 765" fill="none" stroke="#8e8e8e" stroke-width="1.0" stroke-linecap="round" stroke-linejoin="round"/>
<path d="M1060 715C1080 745 1100 780 1120 820 M1050 730C1075 760 1100 800 1125 850" fill="none" stroke="#8e8e8e" stroke-width="0.6" stroke-linecap="round" stroke-linejoin="round"/>
<path d="M1080 725L1085 735L1090 733L1095 745L1100 750L1105 760L1108 772L1115 785" fill="none" stroke="#8e8e8e" stroke-width="0.9" stroke-linecap="round" stroke-linejoin="round"/>
<path d="M1135 845C1142 842 1150 840 1158 843 M1145 875C1155 868 1165 865 1175 868 M1158 893C1168 888 1178 887 1190 888" fill="none" stroke="#8e8e8e" stroke-width="1.0" stroke-linecap="round" stroke-linejoin="round"/>
<path d="M1222 958C1224 938 1236 925 1252 924C1268 924 1280 936 1282 958 M1238 958C1242 940 1252 933 1262 935" fill="none" stroke="#8e8e8e" stroke-width="1.5" stroke-linecap="round" stroke-linejoin="round"/>
<path d="M1012 758C1020 758 1030 758 1040 762C1055 768 1068 782 1078 798C1086 815 1092 832 1100 848C1110 862 1125 872 1144 880" fill="none" stroke="#8e8e8e" stroke-width="1.8" stroke-linecap="round" stroke-linejoin="round"/>
<path d="M1012 758C1018 772 1025 786 1032 796C1045 812 1058 826 1070 842C1082 858 1092 875 1100 887C1110 900 1125 910 1139 923C1144 930 1147 940 1150 958" fill="none" stroke="#8e8e8e" stroke-width="1.8" stroke-linecap="round" stroke-linejoin="round"/>
<path d="M1026 763C1040 768 1055 780 1065 798C1075 815 1082 832 1090 845L1080 847C1072 832 1062 815 1050 800C1042 788 1034 776 1026 763Z" fill="#8e8e8e" fill-opacity="0.13"/>
<path d="M1105 892C1098 890 1090 895 1086 905C1082 915 1085 925 1090 928 M1100 890C1110 893 1118 900 1124 905" fill="none" stroke="#8e8e8e" stroke-width="1.5" stroke-linecap="round" stroke-linejoin="round"/>
<path d="M1120 900C1128 912 1135 930 1140 958 M1150 920C1158 928 1168 942 1175 958" fill="none" stroke="#8e8e8e" stroke-width="1.1" stroke-linecap="round" stroke-linejoin="round"/>
<path d="M1240 330C1250 340 1262 350 1265 365C1275 380 1290 370 1314 340L1314 520C1300 530 1290 525 1283 516L1253 440C1250 420 1252 400 1262 370Z" fill="url(#hL)" fill-opacity="0.26"/>
<path d="M978 465C990 462 1002 462 1012 468C1010 490 1020 515 1040 530C1060 540 1085 538 1105 530C1110 545 1090 560 1050 562C1020 558 995 540 985 515C978 500 976 480 978 465Z" fill="url(#hL)" fill-opacity="0.24"/>
<path d="M1060 718C1080 735 1100 760 1120 800C1135 830 1150 860 1170 895C1180 915 1190 940 1205 958L1240 958C1200 900 1175 860 1155 820C1140 790 1130 760 1125 720Z" fill="url(#hL)" fill-opacity="0.14"/>
<path d="M1015 760C1040 765 1060 785 1075 810C1085 830 1095 850 1110 870L1095 880C1080 860 1065 840 1050 815C1035 795 1025 780 1015 760Z" fill="url(#hL)" fill-opacity="0.24"/>
<path d="M995 685C1010 660 1040 645 1080 632C1110 622 1140 615 1160 622C1165 640 1120 660 1080 675C1040 688 1010 692 995 685Z" fill="url(#hL)" fill-opacity="0.12"/>
<path d="M1029 176C1031 311 1034 611 1037 951" fill="none" stroke="#8e8e8e" stroke-width="1.0" stroke-linecap="round" stroke-linejoin="round"/>
<path d="M1040 605C1040 592 1052 584 1068 584C1086 584 1100 596 1105 612C1108 630 1102 648 1088 654C1070 660 1052 652 1044 638C1040 628 1040 615 1040 605Z" fill="none" stroke="#8e8e8e" stroke-width="1.8" stroke-linecap="round" stroke-linejoin="round"/>
<path d="M1052 608C1056 604 1062 604 1066 608 M1076 606C1080 602 1086 603 1090 608 M1060 630C1066 634 1076 634 1084 630 M1062 640L1070 648L1080 640" fill="none" stroke="#8e8e8e" stroke-width="1.3" stroke-linecap="round" stroke-linejoin="round"/>
<path d="M1024 649C1030 665 1036 682 1040 695 M1121 625C1115 650 1108 672 1100 690" fill="none" stroke="#8e8e8e" stroke-width="1.8" stroke-linecap="round" stroke-linejoin="round"/>
<path d="M1000 678C1020 660 1060 640 1100 628C1130 620 1150 622 1160 630" fill="none" stroke="#8e8e8e" stroke-width="1.2" stroke-linecap="round" stroke-linejoin="round"/>
<path d="M1154 556C1145 562 1132 572 1126 588C1121 600 1120 612 1121 625 M1154 556C1146 566 1138 578 1134 590C1130 602 1128 614 1127 625" fill="none" stroke="#8e8e8e" stroke-width="1.4" stroke-linecap="round" stroke-linejoin="round"/>
<path d="M1297 238C1278 250 1261 268 1259 290C1258 305 1263 318 1274 323C1284 323 1296 307 1312 288" fill="none" stroke="#8e8e8e" stroke-width="1.6" stroke-linecap="round" stroke-linejoin="round"/>
<g fill="#a0a0a0" font-family="Liberation Sans" stroke="#f3f3f3" stroke-width="0.15">
<text transform="translate(950.6 322) rotate(-89)" font-size="16" textLength="139" lengthAdjust="spacing">(siyah ditalan)</text>
<text transform="translate(949.9 366) rotate(-89)" font-size="16" textLength="41" lengthAdjust="spacing">dışı</text>
<text transform="translate(948.7 438) rotate(-89)" font-size="16" textLength="63" lengthAdjust="spacing">çerçeve</text>
<text transform="translate(947.1 532) rotate(-89)" font-size="16" textLength="85" lengthAdjust="spacing">turmesu</text>
<text transform="translate(946.0 597) rotate(-89)" font-size="15" textLength="50" lengthAdjust="spacing">artcan</text>
<text transform="translate(914 707) rotate(-68)" font-size="12" textLength="34" lengthAdjust="spacing">siyah</text>
<text transform="translate(919 730) rotate(-59)" font-size="12" textLength="62" lengthAdjust="spacing">olana dek</text>
<text transform="translate(932 738) rotate(-56)" font-size="12" textLength="38" lengthAdjust="spacing">(kayıp)</text>
</g>
<path d="M947 598C950 608 955 616 963 624 M944 610L947 598L956 601 M963 635L936 673 M936 673L936 663 M936 673L943 673 M930 630L940 638" fill="none" stroke="#a0a0a0" stroke-width="1.2"/>
<circle cx="963" cy="624" r="2.6" fill="#a0a0a0"/></g></g>
<g clip-path="url(#cR)"><path d="M843 157H848 M885 157H893 M927 157H934 M952 157H960 M980 157H990" fill="none" stroke="#000" stroke-width="0.7" stroke-linecap="round" stroke-linejoin="round"/>
<path d="M1030 224C1033 270 1036 320 1038 370 M1034 585C1035 700 1036 800 1038 920" fill="none" stroke="#000" stroke-width="1.0" stroke-linecap="round" stroke-linejoin="round"/>
<path d="M1297 238.6C1285 243 1272 249 1261 257C1252 264 1245 275 1240 290C1236 302 1235 315 1238 327C1242 334 1252 334 1261 330.6C1268 336 1269 347 1264 356C1258 364 1250 366 1246 370C1240 378 1234 390 1228 398C1224 405 1219 409 1206 408C1190 406 1170 390 1150 378C1135 371 1120 366 1106 363.5C1090 361 1075 363 1058 369C1040 376 1025 383 1010 394C995 406 983 422 976 440C970 458 970 478 974 494C979 514 986 528 995 540" fill="none" stroke="#000" stroke-width="5.0" stroke-linecap="round" stroke-linejoin="round"/>
<path d="M1297 238C1278 250 1261 268 1259 290C1258 305 1263 318 1274 323C1284 323 1296 307 1312 288L1314 270C1300 288 1287 306 1279 311C1273 308 1272 297 1272 288C1273 270 1284 252 1297 238Z" fill="#000" fill-opacity="1.00"/>
<path d="M1252 274C1247 290 1244 305 1246 322" fill="none" stroke="#000" stroke-width="1.5" stroke-linecap="round" stroke-linejoin="round"/>
<path d="M1290 326L1296 322 M1285 342L1293 337 M1282 356L1288 350" fill="none" stroke="#000" stroke-width="3.0" stroke-linecap="round" stroke-linejoin="round"/>
<path d="M1262 368C1270 372 1277 380 1280 392 M1270 376C1274 384 1275 392 1272 400" fill="none" stroke="#000" stroke-width="2.0" stroke-linecap="round" stroke-linejoin="round"/>
<path d="M1251 437C1240 447 1222 454 1200 454C1180 454 1162 447 1140 437C1120 428 1100 422 1088 427C1078 433 1068 445 1063 458C1058 472 1060 487 1068 500C1075 508 1088 513 1100 513" fill="none" stroke="#000" stroke-width="5.0" stroke-linecap="round" stroke-linejoin="round"/>
<path d="M1251 437C1240 447 1222 454 1200 454C1180 454 1162 447 1140 437C1120 428 1100 422 1088 427C1078 433 1068 445 1063 458L1070 470C1074 452 1082 440 1094 434C1108 432 1124 433 1142 428C1162 432 1186 436 1210 432C1230 428 1245 426 1256 418Z" fill="#000" fill-opacity="0.55"/>
<path d="M1251 437C1240 447 1222 454 1200 454C1180 454 1162 447 1140 437C1120 428 1100 422 1088 427C1078 433 1068 445 1063 458C1060 468 1058 478 1060 488L1050 478C1050 455 1060 430 1072 412C1090 402 1110 404 1130 412C1160 418 1190 424 1220 420C1238 418 1250 414 1258 410Z" fill="url(#hR)" fill-opacity="0.70"/>
<path d="M1100 372C1115 374 1125 378 1136 385C1142 392 1150 398 1160 402" fill="none" stroke="#000" stroke-width="1.3" stroke-linecap="round" stroke-linejoin="round"/>
<path d="M1020 405C1040 395 1060 390 1080 386" fill="none" stroke="#000" stroke-width="1.0" stroke-linecap="round" stroke-linejoin="round"/>
<path d="M1064 400C1055 410 1047 424 1044 440C1041 452 1038 462 1034 470" fill="none" stroke="#000" stroke-width="4.0" stroke-linecap="round" stroke-linejoin="round"/>
<path d="M1058 420C1052 435 1050 450 1052 466" fill="none" stroke="#000" stroke-width="1.6" stroke-linecap="round" stroke-linejoin="round"/>
<path d="M1001 459C1008 461 1015 467 1020 467C1026 466 1033 459 1038 452" fill="none" stroke="#000" stroke-width="2.5" stroke-linecap="round" stroke-linejoin="round"/>
<path d="M976 470C978 495 985 515 995 532C1003 545 1010 552 1020 558C1012 548 1005 535 1000 520C995 505 993 490 995 475C990 470 982 468 976 470Z" fill="#000" fill-opacity="0.70"/>
<path d="M981 520C990 535 1003 546 1020 556C1035 562 1055 564 1075 561C1090 557 1102 549 1110 538C1116 528 1118 520 1116 510" fill="none" stroke="#000" stroke-width="4.0" stroke-linecap="round" stroke-linejoin="round"/>
<path d="M995 540C1005 548 1020 555 1040 558C1060 560 1080 557 1095 550C1100 545 1098 540 1090 540C1075 545 1060 548 1045 545C1030 542 1015 536 1003 528Z" fill="#000" fill-opacity="0.75"/>
<path d="M1097 479C1097 490 1103 500 1112 508C1118 515 1118 525 1112 532C1105 538 1095 540 1085 540" fill="none" stroke="#000" stroke-width="4.2" stroke-linecap="round" stroke-linejoin="round"/>
<path d="M1040 486L1044 490 M1036 496L1042 498 M1034 506L1040 504 M1055 495C1060 498 1064 500 1068 498 M1055 506C1060 510 1066 512 1070 508" fill="none" stroke="#000" stroke-width="1.8" stroke-linecap="round" stroke-linejoin="round"/>
<path d="M1251 437C1256 425 1264 412 1275 404C1285 396 1295 380 1302 365L1314 362L1314 480C1303 492 1296 503 1290 510C1285 514 1280 516 1277 514C1270 495 1262 470 1253 445Z" fill="#000" fill-opacity="0.30"/>
<path d="M1253 440C1262 468 1270 495 1277 516C1282 515 1287 512 1289 506C1286 485 1280 462 1278 440C1278 420 1282 405 1276 402C1266 410 1257 425 1253 440Z" fill="#000" fill-opacity="1.00"/>
<path d="M1292 470L1305 440 M1296 490L1309 460 M1290 420L1302 395 M1296 410L1308 385" fill="none" stroke="#000" stroke-width="2.2" stroke-linecap="round" stroke-linejoin="round"/>
<path d="M1283 518C1286 530 1288 545 1295 554C1300 558 1306 560 1312 556" fill="none" stroke="#000" stroke-width="3.0" stroke-linecap="round" stroke-linejoin="round"/>
<path d="M1031 563C1028 572 1030 588 1040 600C1045 604 1050 606 1055 606" fill="none" stroke="#000" stroke-width="3.0" stroke-linecap="round" stroke-linejoin="round"/>
<path d="M1072 531C1076 545 1082 560 1089 572C1090 580 1086 588 1078 592" fill="none" stroke="#000" stroke-width="3.2" stroke-linecap="round" stroke-linejoin="round"/>
<path d="M1040 605C1040 592 1052 584 1068 584C1086 584 1100 596 1105 612C1108 630 1102 648 1088 654C1070 660 1052 652 1044 638C1040 628 1040 615 1040 605Z" fill="#000" fill-opacity="1.00"/>
<path d="M990 680C998 665 1010 652 1030 642C1060 628 1090 616 1120 610C1140 607 1160 612 1164 625C1166 635 1160 645 1140 655C1120 665 1095 675 1070 682C1045 688 1020 692 1005 690C995 688 988 685 990 680Z" fill="#000" fill-opacity="1.00"/>
<path d="M984 686C992 668 1005 655 1025 645C1055 630 1090 616 1120 610C1145 606 1165 612 1167 626C1168 640 1155 650 1130 662C1110 672 1090 682 1060 690C1040 695 1015 700 1000 698C990 696 984 692 984 686Z" fill="none" stroke="#000" stroke-width="3.5" stroke-linecap="round" stroke-linejoin="round"/>
<path d="M988 693C1000 702 1030 704 1060 698C1100 690 1140 672 1165 642" fill="none" stroke="#000" stroke-width="3.0" stroke-linecap="round" stroke-linejoin="round"/>
<path d="M1012 672L1028 662 M1052 668L1064 661 M1140 626L1148 638 M1054 612L1062 609 M1076 609L1084 612 M1064 624L1076 622 M1090 632L1094 640 M1026 652L1036 660 M1082 662L1090 654" fill="none" stroke="#fff" stroke-width="1.2" stroke-linecap="round"/>
<path d="M975 630C980 627 986 624 992 625C1003 628 1015 635 1024 649" fill="none" stroke="#000" stroke-width="3.2" stroke-linecap="round" stroke-linejoin="round"/>
<path d="M1154 556C1145 562 1132 572 1126 588C1121 600 1120 612 1121 625L1127 625C1128 612 1130 600 1136 588C1142 575 1150 565 1154 556Z" fill="#000" fill-opacity="1.00"/>
<path d="M1014 705C1030 712 1045 720 1060 735C1075 750 1090 770 1105 792C1120 815 1135 840 1150 866C1165 892 1180 915 1196 935C1202 943 1208 950 1212 958" fill="none" stroke="#000" stroke-width="4.5" stroke-linecap="round" stroke-linejoin="round"/>
<path d="M1153 654C1148 670 1146 690 1146 710C1146 730 1150 752 1158 772C1168 800 1182 830 1198 860C1212 885 1228 905 1242 925C1246 932 1250 940 1254 950" fill="none" stroke="#000" stroke-width="4.5" stroke-linecap="round" stroke-linejoin="round"/>
<path d="M1140 705C1142 725 1148 745 1156 765C1165 790 1178 815 1190 840C1200 860 1215 885 1230 905L1222 910C1205 888 1190 865 1180 845C1168 820 1155 795 1146 770C1138 748 1134 725 1134 706Z" fill="#000" fill-opacity="0.55"/>
<path d="M1105 700C1115 720 1125 740 1135 765" fill="none" stroke="#000" stroke-width="1.5" stroke-linecap="round" stroke-linejoin="round"/>
<path d="M1060 715C1080 745 1100 780 1120 820 M1050 730C1075 760 1100 800 1125 850" fill="none" stroke="#000" stroke-width="1.0" stroke-linecap="round" stroke-linejoin="round"/>
<path d="M1080 725L1085 735L1090 733L1095 745L1100 750L1105 760L1108 772L1115 785" fill="none" stroke="#000" stroke-width="1.5" stroke-linecap="round" stroke-linejoin="round"/>
<path d="M1135 845C1142 842 1150 840 1158 843 M1145 875C1155 868 1165 865 1175 868 M1158 893C1168 888 1178 887 1190 888" fill="none" stroke="#000" stroke-width="2.0" stroke-linecap="round" stroke-linejoin="round"/>
<path d="M1222 958C1224 938 1236 925 1252 924C1268 924 1280 936 1282 958 M1238 958C1242 940 1252 933 1262 935" fill="none" stroke="#000" stroke-width="3.5" stroke-linecap="round" stroke-linejoin="round"/>
<path d="M1012 758C1020 758 1030 758 1040 762C1055 768 1068 782 1078 798C1086 815 1092 832 1100 848C1110 862 1125 872 1144 880" fill="none" stroke="#000" stroke-width="4.2" stroke-linecap="round" stroke-linejoin="round"/>
<path d="M1012 758C1018 772 1025 786 1032 796C1045 812 1058 826 1070 842C1082 858 1092 875 1100 887C1110 900 1125 910 1139 923C1144 930 1147 940 1150 958" fill="none" stroke="#000" stroke-width="4.2" stroke-linecap="round" stroke-linejoin="round"/>
<path d="M1026 763C1040 768 1055 780 1065 798C1075 815 1082 832 1090 845L1080 847C1072 832 1062 815 1050 800C1042 788 1034 776 1026 763Z" fill="#000" fill-opacity="0.60"/>
<path d="M1105 892C1098 890 1090 895 1086 905C1082 915 1085 925 1090 928 M1100 890C1110 893 1118 900 1124 905" fill="none" stroke="#000" stroke-width="3.6" stroke-linecap="round" stroke-linejoin="round"/>
<path d="M1120 900C1128 912 1135 930 1140 958 M1150 920C1158 928 1168 942 1175 958" fill="none" stroke="#000" stroke-width="2.5" stroke-linecap="round" stroke-linejoin="round"/>
<path d="M1240 330C1250 340 1262 350 1265 365C1275 380 1290 370 1314 340L1314 520C1300 530 1290 525 1283 516L1253 440C1250 420 1252 400 1262 370Z" fill="url(#hR)" fill-opacity="0.65"/>
<path d="M978 465C990 462 1002 462 1012 468C1010 490 1020 515 1040 530C1060 540 1085 538 1105 530C1110 545 1090 560 1050 562C1020 558 995 540 985 515C978 500 976 480 978 465Z" fill="url(#hR)" fill-opacity="0.60"/>
<path d="M1060 718C1080 735 1100 760 1120 800C1135 830 1150 860 1170 895C1180 915 1190 940 1205 958L1240 958C1200 900 1175 860 1155 820C1140 790 1130 760 1125 720Z" fill="url(#hR)" fill-opacity="0.35"/>
<path d="M1015 760C1040 765 1060 785 1075 810C1085 830 1095 850 1110 870L1095 880C1080 860 1065 840 1050 815C1035 795 1025 780 1015 760Z" fill="url(#hR)" fill-opacity="0.60"/>
<path d="M995 685C1010 660 1040 645 1080 632C1110 622 1140 615 1160 622C1165 640 1120 660 1080 675C1040 688 1010 692 995 685Z" fill="url(#hR)" fill-opacity="0.30"/>
<g fill="#000" font-family="Liberation Sans" stroke="#fff" stroke-width="0.45">
<text transform="translate(950.6 322) rotate(-89)" font-size="16" textLength="139" lengthAdjust="spacing">(siyah ditalan)</text>
<text transform="translate(949.9 366) rotate(-89)" font-size="16" textLength="41" lengthAdjust="spacing">dışı</text>
<text transform="translate(948.7 438) rotate(-89)" font-size="16" textLength="63" lengthAdjust="spacing">çerçeve</text>
<text transform="translate(947.1 532) rotate(-89)" font-size="16" textLength="85" lengthAdjust="spacing">turmesu</text>
<text transform="translate(946.0 597) rotate(-89)" font-size="15" textLength="50" lengthAdjust="spacing">artcan</text>
<text transform="translate(914 707) rotate(-68)" font-size="12" textLength="34" lengthAdjust="spacing">siyah</text>
<text transform="translate(919 730) rotate(-59)" font-size="12" textLength="62" lengthAdjust="spacing">olana dek</text>
<text transform="translate(932 738) rotate(-56)" font-size="12" textLength="38" lengthAdjust="spacing">(kayıp)</text>
</g>
<path d="M947 598C950 608 955 616 963 624 M944 610L947 598L956 601 M963 635L936 673 M936 673L936 663 M936 673L943 673 M930 630L940 638" fill="none" stroke="#000" stroke-width="1.65"/>
<circle cx="963" cy="624" r="2.6" fill="#000"/></g>
<circle cx="807" cy="935" r="19.5" fill="none" stroke="#fff" stroke-width="3.5" opacity="0.8"/>
<circle cx="807" cy="935" r="20.5" fill="none" stroke="#000" stroke-width="1.6"/>
</svg><!--/ART-->

<!-- TASK BAR -->
<div class="a" style="left:427px;top:953px;width:661px;height:40px;background:#424242;border-radius:6px"></div>
<svg style="left:430px;top:958px" width="10" height="32"><g stroke="#e6e6e6" stroke-width="2" stroke-linecap="round"><path d="M3 2H8M3 7H8M3 12H8M3 17H8M3 22H8M3 27H8"/></g></svg>
<div class="a" style="left:452px;top:958px;width:108px;height:30px;border:1px solid #585858;border-radius:4px"></div>
<svg style="left:460px;top:962px" width="20" height="20" viewBox="0 0 20 20"><circle cx="10" cy="7" r="4" fill="#e0e0e0"/><path d="M2.5 18C3 13 6 12 10 12C14 12 17 13 17.5 18Z" fill="#e0e0e0"/><path d="M5 5A6 6 0 0 1 15 5 M2 12A9 9 0 0 0 1.5 15 M18 12A9 9 0 0 1 18.5 15" fill="none" stroke="#e0e0e0" stroke-width="1" stroke-dasharray="1 1.5"/></svg>
<div class="t" style="left:490px;top:966px;font-size:14px;color:#ececec">Özne seç</div>
<div class="a" style="left:567px;top:958px;width:154px;height:30px;border:1px solid #585858;border-radius:4px"></div>
<svg style="left:576px;top:964px" width="19" height="16" viewBox="0 0 19 16"><rect x="0.8" y="0.8" width="17.4" height="14" fill="none" stroke="#e0e0e0" stroke-width="1.5"/><path d="M1 12L6 6L9 9L13 5L18 10V15H1Z" fill="#e0e0e0"/><g fill="#e0e0e0"><rect x="3" y="3" width="2" height="2"/><rect x="7" y="3" width="2" height="2"/><rect x="11" y="3" width="2" height="2"/><rect x="15" y="3" width="2" height="2"/></g></svg>
<div class="t" style="left:605px;top:966px;font-size:14px;color:#ececec">Arka planı kaldır</div>
<div class="a" style="left:729px;top:958px;width:166px;height:30px;border:1px solid #585858;border-radius:4px"></div>
<svg style="left:737px;top:963px" width="19" height="19" viewBox="0 0 19 19"><circle cx="4.5" cy="5" r="3.5" fill="#e0e0e0"/><circle cx="14" cy="5" r="3.5" fill="#e0e0e0"/><path d="M0 12.5H18" stroke="#e0e0e0" stroke-width="1.3"/><circle cx="7" cy="12.5" r="2.2" fill="#424242" stroke="#e0e0e0" stroke-width="1.3"/><path d="M1 17H18" stroke="#e0e0e0" stroke-width="1.3"/></svg>
<div class="t" style="left:767px;top:966px;font-size:14px;color:#ececec">Renkleri ayarlama</div>
<svg style="left:906px;top:963px" width="21" height="20" viewBox="0 0 21 20"><path d="M9 4L16 9L9 15L2 9Z M2 9V12L9 18L16 12V9" fill="none" stroke="#e0e0e0" stroke-width="1.5" stroke-linejoin="round"/><path d="M6 9H12 M9 6V12" stroke="#e0e0e0" stroke-width="1.3"/><path d="M17 0L18 2.5L20.5 3.5L18 4.5L17 7L16 4.5L13.5 3.5L16 2.5Z" fill="#e0e0e0"/></svg>
<svg style="left:945px;top:963px" width="20" height="20" viewBox="0 0 20 20"><path d="M2 3L15 1.5L18 17L4.5 15Z" fill="none" stroke="#e0e0e0" stroke-width="1.6"/><g fill="#e0e0e0"><rect x="0.5" y="1.5" width="3" height="3"/><rect x="13.5" y="0" width="3" height="3"/><rect x="16.5" y="15.5" width="3" height="3"/><rect x="3" y="13.5" width="3" height="3"/></g></svg>
<svg style="left:983px;top:964px" width="18" height="18" viewBox="0 0 18 18"><circle cx="9" cy="9" r="7.5" fill="none" stroke="#e0e0e0" stroke-width="1.8"/><path d="M14.3 3.7A7.5 7.5 0 0 1 3.7 14.3Z" fill="#e0e0e0"/></svg>
<svg style="left:1019px;top:962px" width="21" height="21" viewBox="0 0 21 21"><path d="M1 9L8 3L12 6.5" fill="none" stroke="#e0e0e0" stroke-width="1.5"/><rect x="1.5" y="9.5" width="9" height="8" fill="none" stroke="#e0e0e0" stroke-width="1.5"/><path d="M12 1H17V5" fill="#e0e0e0"/><rect x="12" y="1" width="5" height="4" fill="#e0e0e0"/><circle cx="14.5" cy="15" r="5.5" fill="#e0e0e0"/><path d="M14.5 12V18M11.5 15H17.5" stroke="#424242" stroke-width="1.5"/></svg>
<svg style="left:1057px;top:970px" width="20" height="6"><g fill="#e0e0e0"><circle cx="3" cy="3" r="2.3"/><circle cx="10" cy="3" r="2.3"/><circle cx="17" cy="3" r="2.3"/></g></svg>
<!-- V SCROLL -->
<div class="a" style="left:1443px;top:113px;width:20px;height:887px;background:#535353"></div>
<div class="a" style="left:1447px;top:403px;width:13px;height:321px;background:#6b6b6b"></div>
<svg style="left:1448px;top:121px" width="10" height="6"><path d="M0.5 5.5L5 1L9.5 5.5" fill="none" stroke="#a8a8a8" stroke-width="1.1"/></svg>
<svg style="left:1448px;top:984px" width="10" height="6"><path d="M0.5 0.5L5 5L9.5 0.5" fill="none" stroke="#a8a8a8" stroke-width="1.1"/></svg>

<!-- STATUS BAR -->
<div class="a" style="left:52px;top:1000px;width:1411px;height:20px;background:#535353"></div>
<div class="a" style="left:52px;top:1000px;width:59px;height:20px;background:#4a4a4a"></div>
<div class="t" style="left:57px;top:1003px;font-size:14.5px;color:#f0f0f0;letter-spacing:0.4px">33.33%</div>
<div class="t" style="left:127px;top:1004px;font-size:12px;color:#d4d4d4;letter-spacing:-0.15px">3307 pks x 2362 pks (118,11 p/cm)</div>
<svg style="left:329px;top:1004px" width="6" height="11"><path d="M0.5 0.5L5 5.5L0.5 10.5" fill="none" stroke="#c8c8c8" stroke-width="1.1"/></svg>
<div class="a" style="left:341px;top:1000px;width:1px;height:19px;background:#444"></div>
<svg style="left:352px;top:1005px" width="6" height="10"><path d="M5.5 0.5L1 5L5.5 9.5" fill="none" stroke="#8a8a8a" stroke-width="1.1"/></svg>
<div class="a" style="left:692px;top:1003px;width:401px;height:13px;background:#6b6b6b"></div>
<svg style="left:1428px;top:1005px" width="6" height="10"><path d="M0.5 0.5L5 5L0.5 9.5" fill="none" stroke="#a8a8a8" stroke-width="1.1"/></svg>
<div class="a" style="left:0;top:1020px;width:1918px;height:2px;background:#0c0c0c"></div>

<!-- RIGHT DOCK -->
<div class="a" style="left:1463px;top:77px;width:3px;height:945px;background:#3a3a3a"></div>
<div class="a" style="left:1466px;top:77px;width:452px;height:16px;background:#424242"></div>
<div class="a" style="left:1466px;top:93px;width:47px;height:85px;background:#535353"></div>
<div class="a" style="left:1513px;top:93px;width:3px;height:929px;background:#3a3a3a"></div>

<svg style="left:1498px;top:82px" width="8" height="6"><path d="M3.3 0.5L1 3L3.3 5.5M7.1 0.5L4.8 3L7.1 5.5" fill="none" stroke="#d8d8d8" stroke-width="1.3"/></svg>
<svg style="left:1903px;top:82px" width="8" height="6"><path d="M0.7 0.5L3 3L0.7 5.5M4.5 0.5L6.8 3L4.5 5.5" fill="none" stroke="#d8d8d8" stroke-width="1.3"/></svg>
<div class="a" style="left:1466px;top:178px;width:47px;height:1px;background:#3e3e3e"></div>
<svg style="left:1474px;top:96px" width="32" height="5"><g stroke="#3c3c3c" stroke-width="1"><path d="M4.5 0V5M6.5 0V5M8.5 0V5M10.5 0V5M12.5 0V5M14.5 0V5M16.5 0V5M18.5 0V5M20.5 0V5M22.5 0V5M24.5 0V5"/></g></svg>
<svg style="left:1479px;top:111px" width="20" height="22" viewBox="0 0 20 22"><rect x="1" y="1" width="5" height="5" fill="none" stroke="#e0e0e0" stroke-width="1.3"/><rect x="1" y="8.5" width="5" height="5" fill="none" stroke="#e0e0e0" stroke-width="1.3"/><rect x="0.5" y="16" width="6" height="6" fill="#e0e0e0"/><path d="M10 6C13 4.5 16 5.5 16 10C16 14 14 17 10.5 19" fill="none" stroke="#e0e0e0" stroke-width="1.8"/><path d="M8.5 3.5L12.5 2L12 7Z" fill="#e0e0e0"/></svg>
<svg style="left:1479px;top:146px" width="20" height="20" viewBox="0 0 20 20"><path d="M2 0H18C19 0 20 1 20 2V11C20 12 19 13 18 13H9L5 18V13H2C1 13 0 12 0 11V2C0 1 1 0 2 0Z" fill="#e0e0e0"/></svg>
<div class="a" style="left:1516px;top:93px;width:402px;height:34px;background:#424242"></div>
<div class="a" style="left:1765px;top:93px;width:73px;height:35px;background:#535353"></div>
<div class="a" style="left:1567px;top:93px;width:1px;height:34px;background:#3a3a3a"></div>
<div class="a" style="left:1677px;top:93px;width:1px;height:34px;background:#3a3a3a"></div>
<div class="a" style="left:1764px;top:93px;width:1px;height:34px;background:#3a3a3a"></div>
<div class="t tab" style="left:1528px;top:102px">Renk</div>
<div class="t tab" style="left:1579px;top:102px">Renk Örnekleri</div>
<div class="t tab" style="left:1689px;top:102px">Degradeler</div>
<div class="t tab" style="left:1777px;top:102px;color:#f2f2f2">Desenler</div>
<svg style="left:1902px;top:105px" width="11" height="9"><path d="M0 0.5H11M0 3H11M0 5.5H11M0 8H11" stroke="#cfcfcf" stroke-width="1"/></svg>
<div class="a" style="left:1516px;top:127px;width:402px;height:83px;background:#535353"></div>
<svg style="left:1526px;top:146px" width="14" height="14" viewBox="0 0 14 14"><circle cx="5.5" cy="5.5" r="4.3" fill="none" stroke="#e0e0e0" stroke-width="1.8"/><path d="M8.5 8.5L13 13" stroke="#e0e0e0" stroke-width="2.2"/></svg>
<div class="a" style="left:1543px;top:140px;width:367px;height:28px;background:#474747;border:1px solid #5f5f5f;border-radius:2px"></div>
<div class="t" style="left:1550px;top:147px;font-size:14px;font-style:italic;color:#8e8e8e">Desen Ara</div>
<div class="a" style="left:1525px;top:178px;width:385px;height:23px;background:#4f4f4f"></div>
<div class="a" style="left:1516px;top:210px;width:402px;height:366px;background:#4d4d4d"></div>
<div class="a" style="left:1516px;top:210px;width:381px;height:37px;background:#434343"></div>
<div class="a" style="left:1516px;top:248px;width:381px;height:35px;background:#434343"></div>
<div class="a" style="left:1516px;top:284px;width:381px;height:36px;background:#434343"></div>
<svg style="left:1527px;top:223px" width="6" height="11"><path d="M0.8 0.5L5 5.5L0.8 10.5" fill="none" stroke="#bdbdbd" stroke-width="1"/></svg><svg style="left:1542px;top:222px" width="15" height="12" viewBox="0 0 15 12"><path d="M0 1.2C0 0.5 0.5 0 1.2 0H5L6.2 1.2H13.8C14.5 1.2 15 1.7 15 2.4V10.8C15 11.5 14.5 12 13.8 12H1.2C0.5 12 0 11.5 0 10.8Z" fill="#e0e0e0"/><path d="M0 2.6H15" stroke="#454545" stroke-width="0.7"/></svg>
<div class="t" style="left:1571px;top:222px;font-size:14px;color:#eeeeee">Ağaçlar</div>
<svg style="left:1527px;top:259px" width="6" height="11"><path d="M0.8 0.5L5 5.5L0.8 10.5" fill="none" stroke="#bdbdbd" stroke-width="1"/></svg><svg style="left:1542px;top:258px" width="15" height="12" viewBox="0 0 15 12"><path d="M0 1.2C0 0.5 0.5 0 1.2 0H5L6.2 1.2H13.8C14.5 1.2 15 1.7 15 2.4V10.8C15 11.5 14.5 12 13.8 12H1.2C0.5 12 0 11.5 0 10.8Z" fill="#e0e0e0"/><path d="M0 2.6H15" stroke="#454545" stroke-width="0.7"/></svg>
<div class="t" style="left:1571px;top:258px;font-size:14px;color:#eeeeee">Çimen</div>
<svg style="left:1527px;top:296px" width="6" height="11"><path d="M0.8 0.5L5 5.5L0.8 10.5" fill="none" stroke="#bdbdbd" stroke-width="1"/></svg><svg style="left:1542px;top:295px" width="15" height="12" viewBox="0 0 15 12"><path d="M0 1.2C0 0.5 0.5 0 1.2 0H5L6.2 1.2H13.8C14.5 1.2 15 1.7 15 2.4V10.8C15 11.5 14.5 12 13.8 12H1.2C0.5 12 0 11.5 0 10.8Z" fill="#e0e0e0"/><path d="M0 2.6H15" stroke="#454545" stroke-width="0.7"/></svg>
<div class="t" style="left:1571px;top:295px;font-size:14px;color:#eeeeee">Su</div>
<div class="a" style="left:1516px;top:576px;width:402px;height:1px;background:#3c3c3c"></div>
<div class="a" style="left:1516px;top:577px;width:402px;height:32px;background:#535353"></div>
<svg style="left:1797px;top:586px" width="15" height="12" viewBox="0 0 15 12"><path d="M0 1.2C0 0.5 0.5 0 1.2 0H5L6.2 1.2H13.8C14.5 1.2 15 1.7 15 2.4V10.8C15 11.5 14.5 12 13.8 12H1.2C0.5 12 0 11.5 0 10.8Z" fill="#e0e0e0"/><path d="M0 2.6H15" stroke="#454545" stroke-width="0.7"/></svg>
<svg style="left:1833px;top:585px" width="14" height="14" viewBox="0 0 14 14"><rect x="0.75" y="0.75" width="12.5" height="12.5" fill="none" stroke="#e0e0e0" stroke-width="1.5"/><path d="M7 3.5V10.5M3.5 7H10.5" stroke="#e0e0e0" stroke-width="1.5"/></svg>
<svg style="left:1869px;top:584px" width="14" height="15" viewBox="0 0 14 15"><path d="M1 2.5H13M5 2.5V1H9V2.5 M2.5 3.5V14H11.5V3.5 M5 5V12.5M7 5V12.5M9 5V12.5" fill="none" stroke="#9a9a9a" stroke-width="1.2"/></svg>
<div class="a" style="left:1516px;top:609px;width:402px;height:3px;background:#3a3a3a"></div>

<!-- LOWER PANELS -->
<div class="a" style="left:1516px;top:612px;width:402px;height:36px;background:#424242"></div>
<div class="a" style="left:1516px;top:612px;width:82px;height:36px;background:#535353"></div>
<div class="t tab" style="left:1528px;top:622px;color:#f2f2f2">Kitaplıklar</div>
<svg style="left:1902px;top:625px" width="11" height="9"><path d="M0 0.5H11M0 3H11M0 5.5H11M0 8H11" stroke="#cfcfcf" stroke-width="1"/></svg>
<div class="a" style="left:1516px;top:648px;width:402px;height:4px;background:#3a3a3a"></div>
<div class="a" style="left:1516px;top:652px;width:402px;height:35px;background:#424242"></div>
<div class="a" style="left:1594px;top:652px;width:64px;height:35px;background:#535353"></div>
<div class="t tab" style="left:1527px;top:661px;color:#a6a6a6">Özellikler</div>
<div class="t tab" style="left:1605px;top:661px;color:#f2f2f2">Ayarlar</div>
<svg style="left:1902px;top:665px" width="11" height="9"><path d="M0 0.5H11M0 3H11M0 5.5H11M0 8H11" stroke="#cfcfcf" stroke-width="1"/></svg>
<div class="a" style="left:1516px;top:687px;width:402px;height:5px;background:#3a3a3a"></div>
<div class="a" style="left:1516px;top:692px;width:402px;height:34px;background:#424242"></div>
<div class="a" style="left:1516px;top:692px;width:83px;height:35px;background:#535353"></div>
<div class="a" style="left:1668px;top:692px;width:1px;height:34px;background:#3a3a3a"></div>
<div class="a" style="left:1723px;top:692px;width:1px;height:34px;background:#3a3a3a"></div>
<div class="t tab" style="left:1527px;top:701px;color:#f2f2f2">Katmanlar</div>
<div class="t tab" style="left:1610px;top:701px;color:#a6a6a6">Kanallar</div>
<div class="t tab" style="left:1680px;top:701px;color:#a6a6a6">Yollar</div>
<svg style="left:1902px;top:705px" width="11" height="9"><path d="M0 0.5H11M0 3H11M0 5.5H11M0 8H11" stroke="#cfcfcf" stroke-width="1"/></svg>
<div class="a" style="left:1516px;top:726px;width:402px;height:261px;background:#535353"></div>
<div class="box" style="left:1521px;top:738px;width:114px;height:26px;background:#454545"></div>
<svg style="left:1530px;top:744px" width="13" height="13" viewBox="0 0 13 13"><circle cx="5" cy="5" r="4" fill="none" stroke="#e0e0e0" stroke-width="1.5"/><path d="M8 8L12 12" stroke="#e0e0e0" stroke-width="1.8"/></svg>
<div class="t" style="left:1548px;top:744px;font-size:13px;color:#ececec">Çeşit</div>
<svg style="left:1622px;top:751px" width="9" height="6"><path d="M0.5 0.5L4.5 4.5L8.5 0.5" fill="none" stroke="#cfcfcf" stroke-width="1.1"/></svg>
<svg style="left:1659px;top:743px" width="16" height="13" viewBox="0 0 16 13"><rect x="0.75" y="0.75" width="14.5" height="11.5" fill="none" stroke="#e0e0e0" stroke-width="1.4"/><path d="M2.5 11L6 6L8.5 8.5L10.5 6.5L13.5 11Z" fill="#e0e0e0"/></svg>
<svg style="left:1690px;top:742px" width="14" height="14" viewBox="0 0 14 14"><circle cx="7" cy="7" r="6" fill="none" stroke="#e0e0e0" stroke-width="1.5"/><path d="M11.2 2.8A6 6 0 0 1 2.8 11.2Z" fill="#e0e0e0"/></svg>
<svg style="left:1720px;top:742px" width="14" height="14" viewBox="0 0 14 14"><path d="M1 3.5V1H13V3.5 M7 1V13 M4 13.2H10" fill="none" stroke="#e0e0e0" stroke-width="1.8"/></svg>
<svg style="left:1751px;top:742px" width="15" height="15" viewBox="0 0 15 15"><rect x="2.5" y="2.5" width="10" height="10" fill="none" stroke="#e0e0e0" stroke-width="1.4"/><g fill="#e0e0e0"><rect x="0" y="0" width="4" height="4"/><rect x="11" y="0" width="4" height="4"/><rect x="0" y="11" width="4" height="4"/><rect x="11" y="11" width="4" height="4"/></g></svg>
<svg style="left:1782px;top:742px" width="14" height="15" viewBox="0 0 14 15"><path d="M5 1H10L13 4V13H5Z" fill="none" stroke="#e0e0e0" stroke-width="1.4"/><rect x="0.5" y="7" width="7" height="7.5" fill="#e0e0e0"/></svg>
<div class="a" style="left:1820px;top:739px;width:12px;height:22px;border-radius:6px;background:#3f3f3f"></div>
<div class="a" style="left:1820px;top:739px;width:12px;height:12px;border-radius:50%;background:#e8e8e8"></div>
<div class="a" style="left:1516px;top:766px;width:402px;height:1px;background:#474747"></div>
<div class="box" style="left:1521px;top:773px;width:187px;height:26px;background:#454545"></div>
<div class="t" style="left:1531px;top:780px;font-size:13px;color:#ececec">Normal</div>
<svg style="left:1695px;top:787px" width="9" height="6"><path d="M0.5 0.5L4.5 4.5L8.5 0.5" fill="none" stroke="#cfcfcf" stroke-width="1.1"/></svg>
<div class="t ol" style="left:1717px;top:779px">Opaklık:</div>
<div class="box" style="left:1768px;top:774px;width:62px;height:20px;background:#454545"></div>
<div class="a" style="left:1813px;top:774px;width:1px;height:20px;background:#3b3b3b"></div>
<div class="t ol" style="left:1771px;top:777px;color:#ececec">100%</div>
<svg style="left:1817px;top:783px" width="9" height="6"><path d="M0.5 0.5L4.5 4.5L8.5 0.5" fill="none" stroke="#cfcfcf" stroke-width="1.1"/></svg>
<div class="a" style="left:1516px;top:802px;width:402px;height:1px;background:#474747"></div>
<div class="t ol" style="left:1524px;top:813px">Kilitle:</div>
<svg style="left:1570px;top:812px" width="15" height="15" viewBox="0 0 15 15"><rect x="0.7" y="0.7" width="13.6" height="13.6" fill="none" stroke="#e0e0e0" stroke-width="1.3"/><g fill="#e0e0e0"><rect x="1" y="1" width="4.3" height="4.3"/><rect x="9.7" y="1" width="4.3" height="4.3"/><rect x="5.3" y="5.3" width="4.4" height="4.4"/><rect x="1" y="9.7" width="4.3" height="4.3"/><rect x="9.7" y="9.7" width="4.3" height="4.3"/></g></svg>
<svg style="left:1597px;top:811px" width="17" height="17" viewBox="0 0 17 17"><path d="M16 1L8 10L6.5 8.5Z" fill="#e0e0e0"/><path d="M6 9C3.5 9 3 11 3 13C2.5 14.5 1.5 15 0.5 16C4 16.5 7.5 15 7.5 11Z" fill="#e0e0e0"/></svg>
<svg style="left:1623px;top:811px" width="17" height="17" viewBox="0 0 17 17"><path d="M8.5 2V15M2 8.5H15" stroke="#e0e0e0" stroke-width="1.4"/><path d="M8.5 0L5.5 3.5H11.5Z M8.5 17L5.5 13.5H11.5Z M0 8.5L3.5 5.5V11.5Z M17 8.5L13.5 5.5V11.5Z" fill="#e0e0e0"/></svg>
<svg style="left:1650px;top:811px" width="18" height="17" viewBox="0 0 18 17"><path d="M3.5 0V14.5H17 M0 3.5H14.5V17" fill="none" stroke="#e0e0e0" stroke-width="1.4"/><path d="M8 7L12 3L13 7Z" fill="#e0e0e0"/></svg>
<svg style="left:1680px;top:810px" width="14" height="17" viewBox="0 0 14 17"><path d="M3.5 7V4.5A3.5 3.5 0 0 1 10.5 4.5V7" fill="none" stroke="#e0e0e0" stroke-width="1.8"/><rect x="1" y="7" width="12" height="9.5" rx="1" fill="#e0e0e0"/><circle cx="7" cy="11.5" r="1.5" fill="#535353"/></svg>
<div class="t ol" style="left:1726px;top:813px">Dolgu:</div>
<div class="box" style="left:1768px;top:808px;width:62px;height:21px;background:#454545"></div>
<div class="a" style="left:1813px;top:808px;width:1px;height:21px;background:#3b3b3b"></div>
<div class="t ol" style="left:1771px;top:811px;color:#ececec">100%</div>
<svg style="left:1817px;top:818px" width="9" height="6"><path d="M0.5 0.5L4.5 4.5L8.5 0.5" fill="none" stroke="#cfcfcf" stroke-width="1.1"/></svg>
<div class="a" style="left:1516px;top:837px;width:402px;height:1px;background:#474747"></div>
<!-- layers list -->
<div class="a" style="left:1554px;top:839px;width:1px;height:146px;background:#474747"></div>
<div class="a" style="left:1516px;top:901px;width:383px;height:1px;background:#474747"></div>
<div class="a" style="left:1555px;top:903px;width:344px;height:81px;background:#6a6a6a"></div>
<div class="a" style="left:1516px;top:985px;width:383px;height:1px;background:#474747"></div>
<svg style="left:1526px;top:856px" width="18" height="10" viewBox="0 0 18 10"><path d="M0.5 5C3 1.5 6 0 9 0C12 0 15 1.5 17.5 5C15 8.5 12 10 9 10C6 10 3 8.5 0.5 5Z" fill="#e0e0e0"/><circle cx="9" cy="5" r="3" fill="#535353"/><circle cx="9" cy="5" r="1.6" fill="#e0e0e0"/></svg>
<svg style="left:1526px;top:940px" width="18" height="10" viewBox="0 0 18 10"><path d="M0.5 5C3 1.5 6 0 9 0C12 0 15 1.5 17.5 5C15 8.5 12 10 9 10C6 10 3 8.5 0.5 5Z" fill="#e0e0e0"/><circle cx="9" cy="5" r="3" fill="#535353"/><circle cx="9" cy="5" r="1.6" fill="#e0e0e0"/></svg>
<div id="thumb1" class="a" style="left:1560px;top:839px;width:97px;height:57px;background-color:#fff;background-image:linear-gradient(45deg,#cdcdcd 25%,transparent 25%,transparent 75%,#cdcdcd 75%),linear-gradient(45deg,#cdcdcd 25%,transparent 25%,transparent 75%,#cdcdcd 75%);background-size:8px 8px;background-position:0 0,4px 4px"></div>
<!--TH1--><svg style="left:1560px;top:839px" width="97" height="57" viewBox="206 155 1103 787" preserveAspectRatio="none">
<rect x="206" y="155" width="573" height="787" fill="#f4f4f4"/>
<g clip-path="url(#cL)"><g transform="translate(-632 -11)"><path d="M843 157H848 M885 157H893 M927 157H934 M952 157H960 M980 157H990" fill="none" stroke="#7a7a7a" stroke-width="2.0" stroke-linecap="round" stroke-linejoin="round"/>
<path d="M1297 238.6C1285 243 1272 249 1261 257C1252 264 1245 275 1240 290C1236 302 1235 315 1238 327C1242 334 1252 334 1261 330.6C1268 336 1269 347 1264 356C1258 364 1250 366 1246 370C1240 378 1234 390 1228 398C1224 405 1219 409 1206 408C1190 406 1170 390 1150 378C1135 371 1120 366 1106 363.5C1090 361 1075 363 1058 369C1040 376 1025 383 1010 394C995 406 983 422 976 440C970 458 970 478 974 494C979 514 986 528 995 540" fill="none" stroke="#7a7a7a" stroke-width="8.8" stroke-linecap="round" stroke-linejoin="round"/>
<path d="M1297 238C1278 250 1261 268 1259 290C1258 305 1263 318 1274 323C1284 323 1296 307 1312 288L1314 270C1300 288 1287 306 1279 311C1273 308 1272 297 1272 288C1273 270 1284 252 1297 238Z" fill="#7a7a7a" fill-opacity="0.10"/>
<path d="M1252 274C1247 290 1244 305 1246 322" fill="none" stroke="#7a7a7a" stroke-width="4.0" stroke-linecap="round" stroke-linejoin="round"/>
<path d="M1290 326L1296 322 M1285 342L1293 337 M1282 356L1288 350" fill="none" stroke="#7a7a7a" stroke-width="4.8" stroke-linecap="round" stroke-linejoin="round"/>
<path d="M1262 368C1270 372 1277 380 1280 392 M1270 376C1274 384 1275 392 1272 400" fill="none" stroke="#7a7a7a" stroke-width="4.0" stroke-linecap="round" stroke-linejoin="round"/>
<path d="M1251 437C1240 447 1222 454 1200 454C1180 454 1162 447 1140 437C1120 428 1100 422 1088 427C1078 433 1068 445 1063 458C1058 472 1060 487 1068 500C1075 508 1088 513 1100 513" fill="none" stroke="#7a7a7a" stroke-width="8.0" stroke-linecap="round" stroke-linejoin="round"/>
<path d="M1251 437C1240 447 1222 454 1200 454C1180 454 1162 447 1140 437C1120 428 1100 422 1088 427C1078 433 1068 445 1063 458L1070 470C1074 452 1082 440 1094 434C1108 432 1124 433 1142 428C1162 432 1186 436 1210 432C1230 428 1245 426 1256 418Z" fill="#7a7a7a" fill-opacity="0.12"/>
<path d="M1251 437C1240 447 1222 454 1200 454C1180 454 1162 447 1140 437C1120 428 1100 422 1088 427C1078 433 1068 445 1063 458C1060 468 1058 478 1060 488L1050 478C1050 455 1060 430 1072 412C1090 402 1110 404 1130 412C1160 418 1190 424 1220 420C1238 418 1250 414 1258 410Z" fill="url(#hL)" fill-opacity="0.28"/>
<path d="M1100 372C1115 374 1125 378 1136 385C1142 392 1150 398 1160 402" fill="none" stroke="#7a7a7a" stroke-width="3.2" stroke-linecap="round" stroke-linejoin="round"/>
<path d="M1020 405C1040 395 1060 390 1080 386" fill="none" stroke="#7a7a7a" stroke-width="2.8" stroke-linecap="round" stroke-linejoin="round"/>
<path d="M1064 400C1055 410 1047 424 1044 440C1041 452 1038 462 1034 470" fill="none" stroke="#7a7a7a" stroke-width="7.2" stroke-linecap="round" stroke-linejoin="round"/>
<path d="M1058 420C1052 435 1050 450 1052 466" fill="none" stroke="#7a7a7a" stroke-width="4.0" stroke-linecap="round" stroke-linejoin="round"/>
<path d="M1001 459C1008 461 1015 467 1020 467C1026 466 1033 459 1038 452" fill="none" stroke="#7a7a7a" stroke-width="4.8" stroke-linecap="round" stroke-linejoin="round"/>
<path d="M976 470C978 495 985 515 995 532C1003 545 1010 552 1020 558C1012 548 1005 535 1000 520C995 505 993 490 995 475C990 470 982 468 976 470Z" fill="#7a7a7a" fill-opacity="0.15"/>
<path d="M981 520C990 535 1003 546 1020 556C1035 562 1055 564 1075 561C1090 557 1102 549 1110 538C1116 528 1118 520 1116 510" fill="none" stroke="#7a7a7a" stroke-width="7.2" stroke-linecap="round" stroke-linejoin="round"/>
<path d="M995 540C1005 548 1020 555 1040 558C1060 560 1080 557 1095 550C1100 545 1098 540 1090 540C1075 545 1060 548 1045 545C1030 542 1015 536 1003 528Z" fill="#7a7a7a" fill-opacity="0.17"/>
<path d="M1097 479C1097 490 1103 500 1112 508C1118 515 1118 525 1112 532C1105 538 1095 540 1085 540" fill="none" stroke="#7a7a7a" stroke-width="7.2" stroke-linecap="round" stroke-linejoin="round"/>
<path d="M1040 486L1044 490 M1036 496L1042 498 M1034 506L1040 504 M1055 495C1060 498 1064 500 1068 498 M1055 506C1060 510 1066 512 1070 508" fill="none" stroke="#7a7a7a" stroke-width="3.6" stroke-linecap="round" stroke-linejoin="round"/>
<path d="M1251 437C1256 425 1264 412 1275 404C1285 396 1295 380 1302 365L1314 362L1314 480C1303 492 1296 503 1290 510C1285 514 1280 516 1277 514C1270 495 1262 470 1253 445Z" fill="#7a7a7a" fill-opacity="0.07"/>
<path d="M1253 440C1262 468 1270 495 1277 516C1282 515 1287 512 1289 506C1286 485 1280 462 1278 440C1278 420 1282 405 1276 402C1266 410 1257 425 1253 440Z" fill="#7a7a7a" fill-opacity="0.10"/>
<path d="M1292 470L1305 440 M1296 490L1309 460 M1290 420L1302 395 M1296 410L1308 385" fill="none" stroke="#7a7a7a" stroke-width="4.0" stroke-linecap="round" stroke-linejoin="round"/>
<path d="M1283 518C1286 530 1288 545 1295 554C1300 558 1306 560 1312 556" fill="none" stroke="#7a7a7a" stroke-width="5.2" stroke-linecap="round" stroke-linejoin="round"/>
<path d="M1031 563C1028 572 1030 588 1040 600C1045 604 1050 606 1055 606" fill="none" stroke="#7a7a7a" stroke-width="5.6" stroke-linecap="round" stroke-linejoin="round"/>
<path d="M1072 531C1076 545 1082 560 1089 572C1090 580 1086 588 1078 592" fill="none" stroke="#7a7a7a" stroke-width="5.6" stroke-linecap="round" stroke-linejoin="round"/>
<path d="M1040 605C1040 592 1052 584 1068 584C1086 584 1100 596 1105 612C1108 630 1102 648 1088 654C1070 660 1052 652 1044 638C1040 628 1040 615 1040 605Z" fill="#7a7a7a" fill-opacity="0.10"/>
<path d="M990 680C998 665 1010 652 1030 642C1060 628 1090 616 1120 610C1140 607 1160 612 1164 625C1166 635 1160 645 1140 655C1120 665 1095 675 1070 682C1045 688 1020 692 1005 690C995 688 988 685 990 680Z" fill="#7a7a7a" fill-opacity="0.10"/>
<path d="M984 686C992 668 1005 655 1025 645C1055 630 1090 616 1120 610C1145 606 1165 612 1167 626C1168 640 1155 650 1130 662C1110 672 1090 682 1060 690C1040 695 1015 700 1000 698C990 696 984 692 984 686Z" fill="none" stroke="#7a7a7a" stroke-width="6.4" stroke-linecap="round" stroke-linejoin="round"/>
<path d="M988 693C1000 702 1030 704 1060 698C1100 690 1140 672 1165 642" fill="none" stroke="#7a7a7a" stroke-width="5.2" stroke-linecap="round" stroke-linejoin="round"/>
<path d="M975 630C980 627 986 624 992 625C1003 628 1015 635 1024 649" fill="none" stroke="#7a7a7a" stroke-width="5.6" stroke-linecap="round" stroke-linejoin="round"/>
<path d="M1154 556C1145 562 1132 572 1126 588C1121 600 1120 612 1121 625L1127 625C1128 612 1130 600 1136 588C1142 575 1150 565 1154 556Z" fill="#7a7a7a" fill-opacity="0.10"/>
<path d="M1014 705C1030 712 1045 720 1060 735C1075 750 1090 770 1105 792C1120 815 1135 840 1150 866C1165 892 1180 915 1196 935C1202 943 1208 950 1212 958" fill="none" stroke="#7a7a7a" stroke-width="7.6" stroke-linecap="round" stroke-linejoin="round"/>
<path d="M1153 654C1148 670 1146 690 1146 710C1146 730 1150 752 1158 772C1168 800 1182 830 1198 860C1212 885 1228 905 1242 925C1246 932 1250 940 1254 950" fill="none" stroke="#7a7a7a" stroke-width="7.6" stroke-linecap="round" stroke-linejoin="round"/>
<path d="M1140 705C1142 725 1148 745 1156 765C1165 790 1178 815 1190 840C1200 860 1215 885 1230 905L1222 910C1205 888 1190 865 1180 845C1168 820 1155 795 1146 770C1138 748 1134 725 1134 706Z" fill="#7a7a7a" fill-opacity="0.12"/>
<path d="M1105 700C1115 720 1125 740 1135 765" fill="none" stroke="#7a7a7a" stroke-width="4.0" stroke-linecap="round" stroke-linejoin="round"/>
<path d="M1060 715C1080 745 1100 780 1120 820 M1050 730C1075 760 1100 800 1125 850" fill="none" stroke="#7a7a7a" stroke-width="2.4" stroke-linecap="round" stroke-linejoin="round"/>
<path d="M1080 725L1085 735L1090 733L1095 745L1100 750L1105 760L1108 772L1115 785" fill="none" stroke="#7a7a7a" stroke-width="3.6" stroke-linecap="round" stroke-linejoin="round"/>
<path d="M1135 845C1142 842 1150 840 1158 843 M1145 875C1155 868 1165 865 1175 868 M1158 893C1168 888 1178 887 1190 888" fill="none" stroke="#7a7a7a" stroke-width="4.0" stroke-linecap="round" stroke-linejoin="round"/>
<path d="M1222 958C1224 938 1236 925 1252 924C1268 924 1280 936 1282 958 M1238 958C1242 940 1252 933 1262 935" fill="none" stroke="#7a7a7a" stroke-width="6.0" stroke-linecap="round" stroke-linejoin="round"/>
<path d="M1012 758C1020 758 1030 758 1040 762C1055 768 1068 782 1078 798C1086 815 1092 832 1100 848C1110 862 1125 872 1144 880" fill="none" stroke="#7a7a7a" stroke-width="7.2" stroke-linecap="round" stroke-linejoin="round"/>
<path d="M1012 758C1018 772 1025 786 1032 796C1045 812 1058 826 1070 842C1082 858 1092 875 1100 887C1110 900 1125 910 1139 923C1144 930 1147 940 1150 958" fill="none" stroke="#7a7a7a" stroke-width="7.2" stroke-linecap="round" stroke-linejoin="round"/>
<path d="M1026 763C1040 768 1055 780 1065 798C1075 815 1082 832 1090 845L1080 847C1072 832 1062 815 1050 800C1042 788 1034 776 1026 763Z" fill="#7a7a7a" fill-opacity="0.13"/>
<path d="M1105 892C1098 890 1090 895 1086 905C1082 915 1085 925 1090 928 M1100 890C1110 893 1118 900 1124 905" fill="none" stroke="#7a7a7a" stroke-width="6.0" stroke-linecap="round" stroke-linejoin="round"/>
<path d="M1120 900C1128 912 1135 930 1140 958 M1150 920C1158 928 1168 942 1175 958" fill="none" stroke="#7a7a7a" stroke-width="4.4" stroke-linecap="round" stroke-linejoin="round"/>
<path d="M1240 330C1250 340 1262 350 1265 365C1275 380 1290 370 1314 340L1314 520C1300 530 1290 525 1283 516L1253 440C1250 420 1252 400 1262 370Z" fill="url(#hL)" fill-opacity="0.26"/>
<path d="M978 465C990 462 1002 462 1012 468C1010 490 1020 515 1040 530C1060 540 1085 538 1105 530C1110 545 1090 560 1050 562C1020 558 995 540 985 515C978 500 976 480 978 465Z" fill="url(#hL)" fill-opacity="0.24"/>
<path d="M1060 718C1080 735 1100 760 1120 800C1135 830 1150 860 1170 895C1180 915 1190 940 1205 958L1240 958C1200 900 1175 860 1155 820C1140 790 1130 760 1125 720Z" fill="url(#hL)" fill-opacity="0.14"/>
<path d="M1015 760C1040 765 1060 785 1075 810C1085 830 1095 850 1110 870L1095 880C1080 860 1065 840 1050 815C1035 795 1025 780 1015 760Z" fill="url(#hL)" fill-opacity="0.24"/>
<path d="M995 685C1010 660 1040 645 1080 632C1110 622 1140 615 1160 622C1165 640 1120 660 1080 675C1040 688 1010 692 995 685Z" fill="url(#hL)" fill-opacity="0.12"/>
<path d="M1029 176C1031 311 1034 611 1037 951" fill="none" stroke="#7a7a7a" stroke-width="4.0" stroke-linecap="round" stroke-linejoin="round"/>
<path d="M1040 605C1040 592 1052 584 1068 584C1086 584 1100 596 1105 612C1108 630 1102 648 1088 654C1070 660 1052 652 1044 638C1040 628 1040 615 1040 605Z" fill="none" stroke="#7a7a7a" stroke-width="7.2" stroke-linecap="round" stroke-linejoin="round"/>
<path d="M1052 608C1056 604 1062 604 1066 608 M1076 606C1080 602 1086 603 1090 608 M1060 630C1066 634 1076 634 1084 630 M1062 640L1070 648L1080 640" fill="none" stroke="#7a7a7a" stroke-width="5.2" stroke-linecap="round" stroke-linejoin="round"/>
<path d="M1024 649C1030 665 1036 682 1040 695 M1121 625C1115 650 1108 672 1100 690" fill="none" stroke="#7a7a7a" stroke-width="7.2" stroke-linecap="round" stroke-linejoin="round"/>
<path d="M1000 678C1020 660 1060 640 1100 628C1130 620 1150 622 1160 630" fill="none" stroke="#7a7a7a" stroke-width="4.8" stroke-linecap="round" stroke-linejoin="round"/>
<path d="M1154 556C1145 562 1132 572 1126 588C1121 600 1120 612 1121 625 M1154 556C1146 566 1138 578 1134 590C1130 602 1128 614 1127 625" fill="none" stroke="#7a7a7a" stroke-width="5.6" stroke-linecap="round" stroke-linejoin="round"/>
<path d="M1297 238C1278 250 1261 268 1259 290C1258 305 1263 318 1274 323C1284 323 1296 307 1312 288" fill="none" stroke="#7a7a7a" stroke-width="6.4" stroke-linecap="round" stroke-linejoin="round"/>
<g fill="#8a8a8a" font-family="Liberation Sans" stroke="#f3f3f3" stroke-width="0.15">
<text transform="translate(950.6 322) rotate(-89)" font-size="16" textLength="139" lengthAdjust="spacing">(siyah ditalan)</text>
<text transform="translate(949.9 366) rotate(-89)" font-size="16" textLength="41" lengthAdjust="spacing">dışı</text>
<text transform="translate(948.7 438) rotate(-89)" font-size="16" textLength="63" lengthAdjust="spacing">çerçeve</text>
<text transform="translate(947.1 532) rotate(-89)" font-size="16" textLength="85" lengthAdjust="spacing">turmesu</text>
<text transform="translate(946.0 597) rotate(-89)" font-size="15" textLength="50" lengthAdjust="spacing">artcan</text>
<text transform="translate(914 707) rotate(-68)" font-size="12" textLength="34" lengthAdjust="spacing">siyah</text>
<text transform="translate(919 730) rotate(-59)" font-size="12" textLength="62" lengthAdjust="spacing">olana dek</text>
<text transform="translate(932 738) rotate(-56)" font-size="12" textLength="38" lengthAdjust="spacing">(kayıp)</text>
</g>
<path d="M947 598C950 608 955 616 963 624 M944 610L947 598L956 601 M963 635L936 673 M936 673L936 663 M936 673L943 673 M930 630L940 638" fill="none" stroke="#8a8a8a" stroke-width="4.8"/>
<circle cx="963" cy="624" r="2.6" fill="#8a8a8a"/></g></g></svg><!--/TH1-->
<div class="a" style="left:1556px;top:906px;width:105px;height:78px;border:2px solid #f0f0f0;background:#3a3a3a"></div>
<div id="thumb2" class="a" style="left:1559px;top:909px;width:99px;height:72px;background-color:#fff;background-image:linear-gradient(45deg,#cdcdcd 25%,transparent 25%,transparent 75%,#cdcdcd 75%),linear-gradient(45deg,#cdcdcd 25%,transparent 25%,transparent 75%,#cdcdcd 75%);background-size:8px 8px;background-position:0 0,4px 4px"></div>
<!--TH2--><svg style="left:1559px;top:909px" width="99" height="72" viewBox="206 155 1103 787" preserveAspectRatio="none">
<rect x="779" y="155" width="530" height="787" fill="#fff"/>
<g clip-path="url(#cR)"><path d="M843 157H848 M885 157H893 M927 157H934 M952 157H960 M980 157H990" fill="none" stroke="#000" stroke-width="2.2399999999999998" stroke-linecap="round" stroke-linejoin="round"/>
<path d="M1030 224C1033 270 1036 320 1038 370 M1034 585C1035 700 1036 800 1038 920" fill="none" stroke="#000" stroke-width="3.2" stroke-linecap="round" stroke-linejoin="round"/>
<path d="M1297 238.6C1285 243 1272 249 1261 257C1252 264 1245 275 1240 290C1236 302 1235 315 1238 327C1242 334 1252 334 1261 330.6C1268 336 1269 347 1264 356C1258 364 1250 366 1246 370C1240 378 1234 390 1228 398C1224 405 1219 409 1206 408C1190 406 1170 390 1150 378C1135 371 1120 366 1106 363.5C1090 361 1075 363 1058 369C1040 376 1025 383 1010 394C995 406 983 422 976 440C970 458 970 478 974 494C979 514 986 528 995 540" fill="none" stroke="#000" stroke-width="16.0" stroke-linecap="round" stroke-linejoin="round"/>
<path d="M1297 238C1278 250 1261 268 1259 290C1258 305 1263 318 1274 323C1284 323 1296 307 1312 288L1314 270C1300 288 1287 306 1279 311C1273 308 1272 297 1272 288C1273 270 1284 252 1297 238Z" fill="#000" fill-opacity="1.00"/>
<path d="M1252 274C1247 290 1244 305 1246 322" fill="none" stroke="#000" stroke-width="4.800000000000001" stroke-linecap="round" stroke-linejoin="round"/>
<path d="M1290 326L1296 322 M1285 342L1293 337 M1282 356L1288 350" fill="none" stroke="#000" stroke-width="9.600000000000001" stroke-linecap="round" stroke-linejoin="round"/>
<path d="M1262 368C1270 372 1277 380 1280 392 M1270 376C1274 384 1275 392 1272 400" fill="none" stroke="#000" stroke-width="6.4" stroke-linecap="round" stroke-linejoin="round"/>
<path d="M1251 437C1240 447 1222 454 1200 454C1180 454 1162 447 1140 437C1120 428 1100 422 1088 427C1078 433 1068 445 1063 458C1058 472 1060 487 1068 500C1075 508 1088 513 1100 513" fill="none" stroke="#000" stroke-width="16.0" stroke-linecap="round" stroke-linejoin="round"/>
<path d="M1251 437C1240 447 1222 454 1200 454C1180 454 1162 447 1140 437C1120 428 1100 422 1088 427C1078 433 1068 445 1063 458L1070 470C1074 452 1082 440 1094 434C1108 432 1124 433 1142 428C1162 432 1186 436 1210 432C1230 428 1245 426 1256 418Z" fill="#000" fill-opacity="0.55"/>
<path d="M1251 437C1240 447 1222 454 1200 454C1180 454 1162 447 1140 437C1120 428 1100 422 1088 427C1078 433 1068 445 1063 458C1060 468 1058 478 1060 488L1050 478C1050 455 1060 430 1072 412C1090 402 1110 404 1130 412C1160 418 1190 424 1220 420C1238 418 1250 414 1258 410Z" fill="url(#hR)" fill-opacity="0.70"/>
<path d="M1100 372C1115 374 1125 378 1136 385C1142 392 1150 398 1160 402" fill="none" stroke="#000" stroke-width="4.16" stroke-linecap="round" stroke-linejoin="round"/>
<path d="M1020 405C1040 395 1060 390 1080 386" fill="none" stroke="#000" stroke-width="3.2" stroke-linecap="round" stroke-linejoin="round"/>
<path d="M1064 400C1055 410 1047 424 1044 440C1041 452 1038 462 1034 470" fill="none" stroke="#000" stroke-width="12.8" stroke-linecap="round" stroke-linejoin="round"/>
<path d="M1058 420C1052 435 1050 450 1052 466" fill="none" stroke="#000" stroke-width="5.120000000000001" stroke-linecap="round" stroke-linejoin="round"/>
<path d="M1001 459C1008 461 1015 467 1020 467C1026 466 1033 459 1038 452" fill="none" stroke="#000" stroke-width="8.0" stroke-linecap="round" stroke-linejoin="round"/>
<path d="M976 470C978 495 985 515 995 532C1003 545 1010 552 1020 558C1012 548 1005 535 1000 520C995 505 993 490 995 475C990 470 982 468 976 470Z" fill="#000" fill-opacity="0.70"/>
<path d="M981 520C990 535 1003 546 1020 556C1035 562 1055 564 1075 561C1090 557 1102 549 1110 538C1116 528 1118 520 1116 510" fill="none" stroke="#000" stroke-width="12.8" stroke-linecap="round" stroke-linejoin="round"/>
<path d="M995 540C1005 548 1020 555 1040 558C1060 560 1080 557 1095 550C1100 545 1098 540 1090 540C1075 545 1060 548 1045 545C1030 542 1015 536 1003 528Z" fill="#000" fill-opacity="0.75"/>
<path d="M1097 479C1097 490 1103 500 1112 508C1118 515 1118 525 1112 532C1105 538 1095 540 1085 540" fill="none" stroke="#000" stroke-width="13.440000000000001" stroke-linecap="round" stroke-linejoin="round"/>
<path d="M1040 486L1044 490 M1036 496L1042 498 M1034 506L1040 504 M1055 495C1060 498 1064 500 1068 498 M1055 506C1060 510 1066 512 1070 508" fill="none" stroke="#000" stroke-width="5.760000000000001" stroke-linecap="round" stroke-linejoin="round"/>
<path d="M1251 437C1256 425 1264 412 1275 404C1285 396 1295 380 1302 365L1314 362L1314 480C1303 492 1296 503 1290 510C1285 514 1280 516 1277 514C1270 495 1262 470 1253 445Z" fill="#000" fill-opacity="0.30"/>
<path d="M1253 440C1262 468 1270 495 1277 516C1282 515 1287 512 1289 506C1286 485 1280 462 1278 440C1278 420 1282 405 1276 402C1266 410 1257 425 1253 440Z" fill="#000" fill-opacity="1.00"/>
<path d="M1292 470L1305 440 M1296 490L1309 460 M1290 420L1302 395 M1296 410L1308 385" fill="none" stroke="#000" stroke-width="7.040000000000001" stroke-linecap="round" stroke-linejoin="round"/>
<path d="M1283 518C1286 530 1288 545 1295 554C1300 558 1306 560 1312 556" fill="none" stroke="#000" stroke-width="9.600000000000001" stroke-linecap="round" stroke-linejoin="round"/>
<path d="M1031 563C1028 572 1030 588 1040 600C1045 604 1050 606 1055 606" fill="none" stroke="#000" stroke-width="9.600000000000001" stroke-linecap="round" stroke-linejoin="round"/>
<path d="M1072 531C1076 545 1082 560 1089 572C1090 580 1086 588 1078 592" fill="none" stroke="#000" stroke-width="10.240000000000002" stroke-linecap="round" stroke-linejoin="round"/>
<path d="M1040 605C1040 592 1052 584 1068 584C1086 584 1100 596 1105 612C1108 630 1102 648 1088 654C1070 660 1052 652 1044 638C1040 628 1040 615 1040 605Z" fill="#000" fill-opacity="1.00"/>
<path d="M990 680C998 665 1010 652 1030 642C1060 628 1090 616 1120 610C1140 607 1160 612 1164 625C1166 635 1160 645 1140 655C1120 665 1095 675 1070 682C1045 688 1020 692 1005 690C995 688 988 685 990 680Z" fill="#000" fill-opacity="1.00"/>
<path d="M984 686C992 668 1005 655 1025 645C1055 630 1090 616 1120 610C1145 606 1165 612 1167 626C1168 640 1155 650 1130 662C1110 672 1090 682 1060 690C1040 695 1015 700 1000 698C990 696 984 692 984 686Z" fill="none" stroke="#000" stroke-width="11.200000000000001" stroke-linecap="round" stroke-linejoin="round"/>
<path d="M988 693C1000 702 1030 704 1060 698C1100 690 1140 672 1165 642" fill="none" stroke="#000" stroke-width="9.600000000000001" stroke-linecap="round" stroke-linejoin="round"/>
<path d="M1012 672L1028 662 M1052 668L1064 661 M1140 626L1148 638 M1054 612L1062 609 M1076 609L1084 612 M1064 624L1076 622 M1090 632L1094 640 M1026 652L1036 660 M1082 662L1090 654" fill="none" stroke="#fff" stroke-width="3.84" stroke-linecap="round"/>
<path d="M975 630C980 627 986 624 992 625C1003 628 1015 635 1024 649" fill="none" stroke="#000" stroke-width="10.240000000000002" stroke-linecap="round" stroke-linejoin="round"/>
<path d="M1154 556C1145 562 1132 572 1126 588C1121 600 1120 612 1121 625L1127 625C1128 612 1130 600 1136 588C1142 575 1150 565 1154 556Z" fill="#000" fill-opacity="1.00"/>
<path d="M1014 705C1030 712 1045 720 1060 735C1075 750 1090 770 1105 792C1120 815 1135 840 1150 866C1165 892 1180 915 1196 935C1202 943 1208 950 1212 958" fill="none" stroke="#000" stroke-width="14.4" stroke-linecap="round" stroke-linejoin="round"/>
<path d="M1153 654C1148 670 1146 690 1146 710C1146 730 1150 752 1158 772C1168 800 1182 830 1198 860C1212 885 1228 905 1242 925C1246 932 1250 940 1254 950" fill="none" stroke="#000" stroke-width="14.4" stroke-linecap="round" stroke-linejoin="round"/>
<path d="M1140 705C1142 725 1148 745 1156 765C1165 790 1178 815 1190 840C1200 860 1215 885 1230 905L1222 910C1205 888 1190 865 1180 845C1168 820 1155 795 1146 770C1138 748 1134 725 1134 706Z" fill="#000" fill-opacity="0.55"/>
<path d="M1105 700C1115 720 1125 740 1135 765" fill="none" stroke="#000" stroke-width="4.800000000000001" stroke-linecap="round" stroke-linejoin="round"/>
<path d="M1060 715C1080 745 1100 780 1120 820 M1050 730C1075 760 1100 800 1125 850" fill="none" stroke="#000" stroke-width="3.2" stroke-linecap="round" stroke-linejoin="round"/>
<path d="M1080 725L1085 735L1090 733L1095 745L1100 750L1105 760L1108 772L1115 785" fill="none" stroke="#000" stroke-width="4.800000000000001" stroke-linecap="round" stroke-linejoin="round"/>
<path d="M1135 845C1142 842 1150 840 1158 843 M1145 875C1155 868 1165 865 1175 868 M1158 893C1168 888 1178 887 1190 888" fill="none" stroke="#000" stroke-width="6.4" stroke-linecap="round" stroke-linejoin="round"/>
<path d="M1222 958C1224 938 1236 925 1252 924C1268 924 1280 936 1282 958 M1238 958C1242 940 1252 933 1262 935" fill="none" stroke="#000" stroke-width="11.200000000000001" stroke-linecap="round" stroke-linejoin="round"/>
<path d="M1012 758C1020 758 1030 758 1040 762C1055 768 1068 782 1078 798C1086 815 1092 832 1100 848C1110 862 1125 872 1144 880" fill="none" stroke="#000" stroke-width="13.440000000000001" stroke-linecap="round" stroke-linejoin="round"/>
<path d="M1012 758C1018 772 1025 786 1032 796C1045 812 1058 826 1070 842C1082 858 1092 875 1100 887C1110 900 1125 910 1139 923C1144 930 1147 940 1150 958" fill="none" stroke="#000" stroke-width="13.440000000000001" stroke-linecap="round" stroke-linejoin="round"/>
<path d="M1026 763C1040 768 1055 780 1065 798C1075 815 1082 832 1090 845L1080 847C1072 832 1062 815 1050 800C1042 788 1034 776 1026 763Z" fill="#000" fill-opacity="0.60"/>
<path d="M1105 892C1098 890 1090 895 1086 905C1082 915 1085 925 1090 928 M1100 890C1110 893 1118 900 1124 905" fill="none" stroke="#000" stroke-width="11.520000000000001" stroke-linecap="round" stroke-linejoin="round"/>
<path d="M1120 900C1128 912 1135 930 1140 958 M1150 920C1158 928 1168 942 1175 958" fill="none" stroke="#000" stroke-width="8.0" stroke-linecap="round" stroke-linejoin="round"/>
<path d="M1240 330C1250 340 1262 350 1265 365C1275 380 1290 370 1314 340L1314 520C1300 530 1290 525 1283 516L1253 440C1250 420 1252 400 1262 370Z" fill="url(#hR)" fill-opacity="0.65"/>
<path d="M978 465C990 462 1002 462 1012 468C1010 490 1020 515 1040 530C1060 540 1085 538 1105 530C1110 545 1090 560 1050 562C1020 558 995 540 985 515C978 500 976 480 978 465Z" fill="url(#hR)" fill-opacity="0.60"/>
<path d="M1060 718C1080 735 1100 760 1120 800C1135 830 1150 860 1170 895C1180 915 1190 940 1205 958L1240 958C1200 900 1175 860 1155 820C1140 790 1130 760 1125 720Z" fill="url(#hR)" fill-opacity="0.35"/>
<path d="M1015 760C1040 765 1060 785 1075 810C1085 830 1095 850 1110 870L1095 880C1080 860 1065 840 1050 815C1035 795 1025 780 1015 760Z" fill="url(#hR)" fill-opacity="0.60"/>
<path d="M995 685C1010 660 1040 645 1080 632C1110 622 1140 615 1160 622C1165 640 1120 660 1080 675C1040 688 1010 692 995 685Z" fill="url(#hR)" fill-opacity="0.30"/>
<g fill="#000" font-family="Liberation Sans" stroke="#fff" stroke-width="0.45">
<text transform="translate(950.6 322) rotate(-89)" font-size="16" textLength="139" lengthAdjust="spacing">(siyah ditalan)</text>
<text transform="translate(949.9 366) rotate(-89)" font-size="16" textLength="41" lengthAdjust="spacing">dışı</text>
<text transform="translate(948.7 438) rotate(-89)" font-size="16" textLength="63" lengthAdjust="spacing">çerçeve</text>
<text transform="translate(947.1 532) rotate(-89)" font-size="16" textLength="85" lengthAdjust="spacing">turmesu</text>
<text transform="translate(946.0 597) rotate(-89)" font-size="15" textLength="50" lengthAdjust="spacing">artcan</text>
<text transform="translate(914 707) rotate(-68)" font-size="12" textLength="34" lengthAdjust="spacing">siyah</text>
<text transform="translate(919 730) rotate(-59)" font-size="12" textLength="62" lengthAdjust="spacing">olana dek</text>
<text transform="translate(932 738) rotate(-56)" font-size="12" textLength="38" lengthAdjust="spacing">(kayıp)</text>
</g>
<path d="M947 598C950 608 955 616 963 624 M944 610L947 598L956 601 M963 635L936 673 M936 673L936 663 M936 673L943 673 M930 630L940 638" fill="none" stroke="#000" stroke-width="3.84"/>
<circle cx="963" cy="624" r="2.6" fill="#000"/></g></svg><!--/TH2-->
<div class="t" style="left:1671px;top:854px;font-size:13px;color:#ececec">grafit ve tükenmez</div>
<div class="t" style="left:1671px;top:938px;font-size:13px;color:#ececec">dijital tarama</div>
<div class="a" style="left:1899px;top:839px;width:19px;height:147px;background:#4d4d4d"></div>
<div class="a" style="left:1902px;top:866px;width:14px;height:46px;background:#6a6a6a;border-radius:2px"></div>
<svg style="left:1905px;top:849px" width="9" height="5"><path d="M0.5 4.5L4.5 0.5L8.5 4.5" fill="none" stroke="#a8a8a8" stroke-width="1"/></svg>
<svg style="left:1905px;top:972px" width="9" height="5"><path d="M0.5 0.5L4.5 4.5L8.5 0.5" fill="none" stroke="#a8a8a8" stroke-width="1"/></svg>
<div class="a" style="left:1516px;top:986px;width:402px;height:33px;background:#535353"></div>
<svg style="left:1665px;top:997px" width="18" height="11" viewBox="0 0 18 11"><path d="M6 1.5H4.5A4 4 0 0 0 4.5 9.5H6 M12 1.5H13.5A4 4 0 0 1 13.5 9.5H12 M5 5.5H13" fill="none" stroke="#9a9a9a" stroke-width="1.6"/></svg>
<div class="t" style="left:1701px;top:995px;font-size:16px;font-style:italic;color:#e0e0e0;font-family:'Liberation Serif',serif">fx</div>
<svg style="left:1714px;top:1010px" width="5" height="3"><path d="M0 0H5L2.5 3Z" fill="#e0e0e0"/></svg>
<svg style="left:1734px;top:996px" width="17" height="14" viewBox="0 0 17 14"><rect x="0" y="0" width="17" height="14" rx="1.5" fill="#e0e0e0"/><circle cx="8.5" cy="7" r="4" fill="#535353"/></svg>
<svg style="left:1769px;top:995px" width="15" height="15" viewBox="0 0 15 15"><circle cx="7.5" cy="7.5" r="6.2" fill="none" stroke="#e0e0e0" stroke-width="1.6"/><path d="M11.9 3.1A6.2 6.2 0 0 1 3.1 11.9Z" fill="#e0e0e0"/></svg>
<svg style="left:1783px;top:1010px" width="5" height="3"><path d="M0 0H5L2.5 3Z" fill="#e0e0e0"/></svg>
<svg style="left:1802px;top:997px" width="15" height="12" viewBox="0 0 15 12"><path d="M0 1.2C0 0.5 0.5 0 1.2 0H5L6.2 1.2H13.8C14.5 1.2 15 1.7 15 2.4V10.8C15 11.5 14.5 12 13.8 12H1.2C0.5 12 0 11.5 0 10.8Z" fill="#e0e0e0"/><path d="M0 2.6H15" stroke="#535353" stroke-width="0.7"/></svg>
<svg style="left:1837px;top:996px" width="14" height="14" viewBox="0 0 14 14"><rect x="0.75" y="0.75" width="12.5" height="12.5" fill="none" stroke="#e0e0e0" stroke-width="1.5"/><path d="M7 3.5V10.5M3.5 7H10.5" stroke="#e0e0e0" stroke-width="1.5"/></svg>
<svg style="left:1870px;top:995px" width="14" height="15" viewBox="0 0 14 15"><path d="M1 2.5H13M5 2.5V1H9V2.5 M2.5 3.5V14H11.5V3.5 M5 5V12.5M7 5V12.5M9 5V12.5" fill="none" stroke="#e0e0e0" stroke-width="1.3"/></svg>
</body></html>
